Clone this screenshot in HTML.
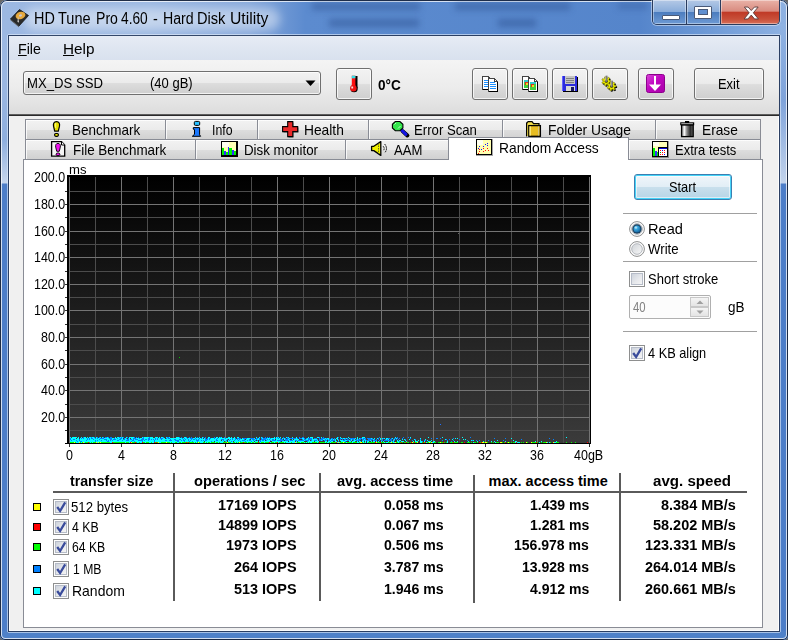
<!DOCTYPE html>
<html><head><meta charset="utf-8"><title>HD Tune Pro 4.60 - Hard Disk Utility</title>
<style>
html,body{margin:0;padding:0}
body{width:788px;height:640px;position:relative;overflow:hidden;background:#6a6a6a;font-family:"Liberation Sans",sans-serif;font-size:13px;color:#000}
div,span{position:absolute;box-sizing:border-box;white-space:nowrap}
.frame{left:0;top:0;width:788px;height:640px;border-radius:7px 7px 5px 5px;background:#4f81c8;overflow:hidden}
.tbg{left:0;top:0;width:788px;height:36px;background:linear-gradient(to right,#9cb8e2 0,#9ab7e1 150px,#86a8db 250px,#5c8bcf 305px,#5585cb 640px,#6a97d5 700px,#8fb2e2 788px)}
.lfr{left:0;top:30px;width:9px;height:610px;background:linear-gradient(to bottom,#9cb8e2 0,#9ab6e1 60px,#8eaede 110px,#c6d6ee 153px,#4c7dc8 154px,#4c7dc8 100%)}
.rfr{left:779px;top:24px;width:9px;height:616px;background:linear-gradient(to bottom,#8fb2e2 0,#7fa3da 76px,#c2d3ec 159px,#4c7dc8 160px,#4c7dc8 100%)}
.bfr{left:0;top:631px;width:788px;height:9px;background:#4f81c8}
.client{left:9px;top:36px;width:770px;height:595px;background:#f0f0f0}
.menu{left:9px;top:36px;width:770px;height:24px;background:linear-gradient(to bottom,#e6ecf5 0,#dfe6f1 50%,#d9e1ee 100%)}
.tool{left:9px;top:60px;width:770px;height:55px;background:linear-gradient(to bottom,#f4f4f4 0,#ececec 50%,#dcdcdc 100%)}
.btn{border:1px solid #707070;border-radius:3px;background:linear-gradient(to bottom,#f2f2f2 0,#ebebeb 48%,#dddddd 52%,#cfcfcf 100%);box-shadow:inset 0 0 0 1px rgba(255,255,255,.75)}
.tab{height:21px;border:1px solid #898c95;border-bottom:none;background:linear-gradient(to bottom,#f2f2f2 0,#ebebeb 48%,#dddddd 52%,#cfcfcf 100%);box-shadow:inset 1px 1px 0 0 rgba(255,255,255,.8)}
.tx{line-height:18px;transform-origin:0 0}
.yl{left:24px;width:42px;text-align:right;font-size:13px;line-height:16px}
.xl{top:448px;width:40px;text-align:center;font-size:13px;line-height:16px}
.b{font-weight:bold;font-size:14px;line-height:16px}
.hd{top:473px;text-align:center}
.v{text-align:right}
.cb{width:16px;height:16px;border:1px solid #8e8f8f;background:linear-gradient(135deg,#dcdcdc 0,#f6f6f6 100%);box-shadow:inset 0 0 0 1px #f4f4f4, inset 0 0 0 2px #b4b4b4}
.sq{left:33px;width:8px;height:8px;border:1px solid #000}
.sep{left:623px;width:134px;height:1px;background:#a0a0a0}
</style></head><body>
<div class="frame">
<div class="tbg"></div>
<div class="lfr"></div><div class="rfr"></div><div class="bfr"></div>
<!-- outer edges -->
<div style="left:0;top:0;width:788px;height:640px;border:1px solid #1c2a44;border-radius:7px 7px 5px 5px"></div>
<div style="left:1px;top:1px;width:786px;height:638px;border:1px solid rgba(255,255,255,.75);border-radius:6px 6px 4px 4px"></div>
<div style="left:7px;top:34px;width:774px;height:599px;border:1px solid rgba(225,236,250,.62);border-radius:2px"></div>
<!-- client border -->
<div style="left:8px;top:35px;width:772px;height:597px;border:1px solid #2b3f63;background:#f0f0f0"></div>
<div style="left:9px;top:36px;width:770px;height:595px;border:1px solid #fcfcfc;border-top:none"></div>
<div class="menu"></div>
<div class="tool"></div>
<div style="left:9px;top:114px;width:770px;height:2px;background:linear-gradient(to bottom,#777 0,#111 100%)"></div>

<!-- title -->
<div style="left:312px;top:3px;width:108px;height:7px;background:rgba(40,75,140,.45);filter:blur(3px)"></div>
<div style="left:455px;top:3px;width:115px;height:7px;background:rgba(40,75,140,.45);filter:blur(3px)"></div>
<div style="left:329px;top:19px;width:90px;height:8px;background:rgba(40,75,140,.45);filter:blur(3px)"></div>
<div style="left:498px;top:19px;width:38px;height:8px;background:rgba(40,75,140,.45);filter:blur(3px)"></div>
<div style="left:618px;top:3px;width:30px;height:6px;background:rgba(40,75,140,.35);filter:blur(3px)"></div>

<div style="left:24px;top:8px;width:256px;height:22px;border-radius:11px;background:rgba(255,255,255,.42);filter:blur(5px)"></div>
<svg style="position:absolute;left:9px;top:7px" width="22" height="22" viewBox="0 0 22 22">
<polygon points="1.5,12 10.5,2.5 19.5,8.5 10,19" fill="#2a2a2a" stroke="#111" stroke-width="0.8"/>
<polygon points="1.5,12 10,19 10,20.2 1.5,13.2" fill="#555"/>
<ellipse cx="11.5" cy="8.5" rx="5" ry="3.6" transform="rotate(-18 11.5 8.5)" fill="#e6a83c"/>
<ellipse cx="11.5" cy="8.5" rx="1.5" ry="1.1" transform="rotate(-18 11.5 8.5)" fill="#c8c8d8"/>
<path d="M9 9 L8.5 15 L10 15.5 Z" fill="#ddd"/>
</svg>

<!-- window buttons -->
<div style="left:652px;top:0;width:128px;height:25px;border:1px solid #2a3c5e;border-top:none;border-radius:0 0 5px 5px;overflow:hidden;box-shadow:0 0 0 1px rgba(255,255,255,.45)">
 <div style="left:0;top:0;width:34px;height:24px;background:linear-gradient(to bottom,#b4c9e6 0,#8badda 48%,#4c7dbf 52%,#6e9ad4 100%);border-right:1px solid #2a3c5e;box-shadow:inset 0 0 0 1px rgba(255,255,255,.4)"></div>
 <div style="left:34px;top:0;width:34px;height:24px;background:linear-gradient(to bottom,#b4c9e6 0,#8badda 48%,#4c7dbf 52%,#6e9ad4 100%);border-right:1px solid #2a3c5e;box-shadow:inset 0 0 0 1px rgba(255,255,255,.4)"></div>
 <div style="left:68px;top:0;width:59px;height:24px;background:linear-gradient(to bottom,#e9b2a8 0,#d98c80 46%,#c03a27 52%,#c8503a 80%,#d8705a 100%);box-shadow:inset 0 0 0 1px rgba(255,255,255,.4)"></div>
</div>
<div style="left:662px;top:15px;width:18px;height:5px;background:#fff;border:1px solid #4a5a78;border-radius:1px"></div>
<div style="left:694px;top:6px;width:18px;height:13px;border:1px solid #4a5a78;border-radius:1px;background:#fff"></div>
<div style="left:698px;top:9px;width:10px;height:6px;border:1px solid #4a5a78;background:#5f8fd0"></div>
<svg style="position:absolute;left:742.500px;top:6px" width="16.500" height="14" viewBox="0 0 18 15"><path d="M1.5 1 L5.5 1 L9 4.8 L12.5 1 L16.5 1 L11.3 7.3 L16.8 14 L12.6 14 L9 9.8 L5.4 14 L1.2 14 L6.7 7.3 Z" fill="#fff" stroke="#5a3a3a" stroke-width="1"/></svg>

<!-- menu -->

<!-- toolbar -->
<div class="btn" style="left:23px;top:71px;width:298px;height:24px"></div>
<svg style="position:absolute;left:305px;top:80px" width="11" height="7" viewBox="0 0 11 7"><polygon points="0.5,0.5 10.5,0.5 5.5,6" fill="#000"/></svg>

<div class="btn" style="left:336px;top:68px;width:36px;height:32px"></div>
<svg style="position:absolute;left:348px;top:75px" width="12" height="18" viewBox="0 0 12 18">
<rect x="5" y="1" width="4.500" height="12" fill="#000"/>
<circle cx="6.100" cy="13.700" r="3.600" fill="#000"/>
<rect x="3.800" y="0.700" width="3.600" height="12" fill="#ff1010"/>
<rect x="3.800" y="0.700" width="3.600" height="2.600" fill="#30e0e8"/>
<circle cx="5.400" cy="13.300" r="3.200" fill="#f01010"/>
<rect x="3.300" y="11.500" width="1.800" height="2" fill="#fff" opacity=".85"/>
</svg>

<div class="btn" style="left:472px;top:68px;width:36px;height:32px"></div>
<svg style="position:absolute;left:482px;top:76px" width="17" height="16" viewBox="0 0 17 16" shape-rendering="crispEdges"><g transform="translate(0,0)"><path d="M0.500 0.500 h6 l3 3 v10 h-9z" fill="#fff" stroke="#444" stroke-width="1"/><path d="M6.500 0.500 v3 h3" fill="none" stroke="#444" stroke-width="1"/><path d="M9.500 4 v10 M1 13.500 h9" stroke="#000" stroke-width="1"/><path d="M2 4.500h5M2 6.500h6M2 8.500h6M2 10.500h6" stroke="#1e90ff" stroke-width="1"/></g><g transform="translate(6,2)"><path d="M0.500 0.500 h6 l3 3 v10 h-9z" fill="#fff" stroke="#444" stroke-width="1"/><path d="M6.500 0.500 v3 h3" fill="none" stroke="#444" stroke-width="1"/><path d="M9.500 4 v10 M1 13.500 h9" stroke="#000" stroke-width="1"/><path d="M2 4.500h5M2 6.500h6M2 8.500h6M2 10.500h6" stroke="#1e90ff" stroke-width="1"/></g></svg>
<div class="btn" style="left:512px;top:68px;width:36px;height:32px"></div>
<svg style="position:absolute;left:522px;top:76px" width="17" height="16" viewBox="0 0 17 16" shape-rendering="crispEdges"><g transform="translate(0,0)"><path d="M0.500 0.500 h6 l3 3 v10 h-9z" fill="#fff" stroke="#444" stroke-width="1"/><path d="M6.500 0.500 v3 h3" fill="none" stroke="#444" stroke-width="1"/><path d="M9.500 4 v10 M1 13.500 h9" stroke="#000" stroke-width="1"/><rect x="2" y="4" width="6" height="8" fill="#30c8d0"/><rect x="2" y="6" width="6" height="6" fill="#40d040"/><rect x="3" y="6" width="3" height="3" fill="#e03020"/><rect x="4" y="7" width="2" height="2" fill="#f0e020"/></g><g transform="translate(6,2)"><path d="M0.500 0.500 h6 l3 3 v10 h-9z" fill="#fff" stroke="#444" stroke-width="1"/><path d="M6.500 0.500 v3 h3" fill="none" stroke="#444" stroke-width="1"/><path d="M9.500 4 v10 M1 13.500 h9" stroke="#000" stroke-width="1"/><rect x="2" y="4" width="6" height="8" fill="#30c8d0"/><rect x="2" y="6" width="6" height="6" fill="#40d040"/><rect x="3" y="6" width="3" height="3" fill="#e03020"/><rect x="4" y="7" width="2" height="2" fill="#f0e020"/></g></svg>
<div class="btn" style="left:552px;top:68px;width:36px;height:32px"></div>
<svg style="position:absolute;left:562px;top:76px" width="16" height="16" viewBox="0 0 16 16" shape-rendering="crispEdges"><rect x="0" y="0" width="15" height="15" fill="#2c2cdc"/><path d="M15.500 1 v15 M1 15.500 h15" stroke="#000" stroke-width="1"/><rect x="0" y="0" width="1" height="15" fill="#6060ff"/><rect x="3" y="0" width="10" height="8" fill="#c4c4c4"/><path d="M4 2.500h8M4 4.500h8M4 6.500h8" stroke="#808080" stroke-width="1"/><rect x="4" y="10" width="9" height="5" fill="#d8d8d8"/><rect x="9" y="11" width="3" height="4" fill="#181860"/></svg>
<div class="btn" style="left:592px;top:68px;width:36px;height:32px"></div>
<svg style="position:absolute;left:600px;top:75px" width="18" height="17" viewBox="0 0 18 17"><g transform="translate(6.3,6.2)"><path d="M4.51 -0.90 L4.51 0.90 L3.08 0.85 L2.59 1.88 L3.52 2.96 L2.11 4.09 L1.26 2.94 L0.14 3.20 L-0.12 4.60 L-1.88 4.20 L-1.52 2.82 L-2.41 2.11 L-3.67 2.77 L-4.46 1.14 L-3.15 0.57 L-3.15 -0.57 L-4.46 -1.14 L-3.67 -2.77 L-2.41 -2.11 L-1.52 -2.82 L-1.88 -4.20 L-0.12 -4.60 L0.14 -3.20 L1.26 -2.94 L2.11 -4.09 L3.52 -2.96 L2.59 -1.88 L3.08 -0.85Z" fill="#000" transform="translate(1,1)"/><path d="M4.51 -0.90 L4.51 0.90 L3.08 0.85 L2.59 1.88 L3.52 2.96 L2.11 4.09 L1.26 2.94 L0.14 3.20 L-0.12 4.60 L-1.88 4.20 L-1.52 2.82 L-2.41 2.11 L-3.67 2.77 L-4.46 1.14 L-3.15 0.57 L-3.15 -0.57 L-4.46 -1.14 L-3.67 -2.77 L-2.41 -2.11 L-1.52 -2.82 L-1.88 -4.20 L-0.12 -4.60 L0.14 -3.20 L1.26 -2.94 L2.11 -4.09 L3.52 -2.96 L2.59 -1.88 L3.08 -0.85Z" fill="#e8e800" stroke="#6a6a00" stroke-width="0.500"/><circle r="1.500" fill="#303000"/><rect x="-1" y="-5.500" width="2" height="6" fill="#a8a8a8"/><rect x="0.200" y="-5.500" width="0.800" height="6" fill="#505050"/></g><g transform="translate(11.6,11.2)"><path d="M4.51 -0.90 L4.51 0.90 L3.08 0.85 L2.59 1.88 L3.52 2.96 L2.11 4.09 L1.26 2.94 L0.14 3.20 L-0.12 4.60 L-1.88 4.20 L-1.52 2.82 L-2.41 2.11 L-3.67 2.77 L-4.46 1.14 L-3.15 0.57 L-3.15 -0.57 L-4.46 -1.14 L-3.67 -2.77 L-2.41 -2.11 L-1.52 -2.82 L-1.88 -4.20 L-0.12 -4.60 L0.14 -3.20 L1.26 -2.94 L2.11 -4.09 L3.52 -2.96 L2.59 -1.88 L3.08 -0.85Z" fill="#000" transform="translate(1,1)"/><path d="M4.51 -0.90 L4.51 0.90 L3.08 0.85 L2.59 1.88 L3.52 2.96 L2.11 4.09 L1.26 2.94 L0.14 3.20 L-0.12 4.60 L-1.88 4.20 L-1.52 2.82 L-2.41 2.11 L-3.67 2.77 L-4.46 1.14 L-3.15 0.57 L-3.15 -0.57 L-4.46 -1.14 L-3.67 -2.77 L-2.41 -2.11 L-1.52 -2.82 L-1.88 -4.20 L-0.12 -4.60 L0.14 -3.20 L1.26 -2.94 L2.11 -4.09 L3.52 -2.96 L2.59 -1.88 L3.08 -0.85Z" fill="#e8e800" stroke="#6a6a00" stroke-width="0.500"/><circle r="1.500" fill="#303000"/><rect x="-1" y="-5.500" width="2" height="6" fill="#a8a8a8"/><rect x="0.200" y="-5.500" width="0.800" height="6" fill="#505050"/></g></svg>
<div class="btn" style="left:638px;top:68px;width:36px;height:32px"></div>
<svg style="position:absolute;left:646px;top:74px" width="19" height="19" viewBox="0 0 19 19">
<defs><linearGradient id="mg" x1="0" y1="0" x2="1" y2="1"><stop offset="0" stop-color="#d848d8"/><stop offset="0.45" stop-color="#c008c0"/><stop offset="1" stop-color="#a800a8"/></linearGradient></defs>
<rect x="0.500" y="0.500" width="18" height="18" rx="2" fill="url(#mg)" stroke="#8c008c" stroke-width="1"/>
<rect x="8" y="2" width="2" height="11" fill="#fff"/><polygon points="3,10.500 15,10.500 9,17" fill="#fff"/>
</svg>
<div class="btn" style="left:694px;top:68px;width:70px;height:32px"></div>

<!-- tabs row 1 -->
<div class="tab" style="left:25px;top:119px;width:141px"></div>
<div class="tab" style="left:165px;top:119px;width:93px"></div>
<div class="tab" style="left:257px;top:119px;width:112px"></div>
<div class="tab" style="left:368px;top:119px;width:135px"></div>
<div class="tab" style="left:502px;top:119px;width:154px"></div>
<div class="tab" style="left:655px;top:119px;width:106px"></div>
<!-- tabs row 2 -->
<div class="tab" style="left:25px;top:139px;width:171px"></div>
<div class="tab" style="left:195px;top:139px;width:151px"></div>
<div class="tab" style="left:345px;top:139px;width:104px"></div>
<div class="tab" style="left:628px;top:139px;width:133px"></div>
<!-- panel -->
<div style="left:23px;top:159px;width:740px;height:469px;border:1px solid #898c95;background:#fff"></div>
<div style="left:448px;top:137px;width:181px;height:23px;border:1px solid #898c95;border-bottom:none;background:#fff"></div>

<!-- tab labels -->

<!-- tab icons -->
<svg style="position:absolute;left:0;top:0" width="788" height="165" viewBox="0 0 788 165">
<!-- benchmark: yellow ! -->
<path d="M56.500 121.600 c2.700 0 3.400 2.200 3 4.600 l-1.200 4.900 h-3.600 l-1.200 -4.900 c-0.400 -2.400 0.300 -4.600 3 -4.600z" fill="#e6e000" stroke="#000" stroke-width="1.200"/>
<rect x="54.600" y="133.500" width="3.800" height="2.800" rx="1.200" fill="#e6e000" stroke="#000" stroke-width="1.200"/>
<rect x="55" y="123" width="1.200" height="5" fill="#fafa90" opacity=".8"/>
<!-- info: blue i -->
<rect x="194.300" y="121.400" width="5.400" height="4" rx="1.200" fill="#28c0ff" stroke="#000" stroke-width="1"/>
<path d="M193.300 127.600 H199.600 V134.800 L200.600 136.300 H192.300 L194.500 134.300 V129.600 L193.300 129.200 Z" fill="#1a78ff" stroke="#000" stroke-width="1" stroke-linejoin="round"/>
<!-- health: red cross -->
<path d="M288.500 122.500 H293.500 V127.500 H298.500 V132.500 H293.500 V137.500 H288.500 V132.500 H283.500 V127.500 H288.500 Z" fill="#000" opacity=".55"/>
<path d="M287.700 121.600 H292.800 V126.600 H297.700 V131.600 H292.800 V136.600 H287.700 V131.600 H282.600 V126.600 H287.700 Z" fill="#e82a2a" stroke="#000" stroke-width="1.100"/>
<!-- error scan: magnifier -->
<path d="M402 130.500 L406.800 134.900" stroke="#000" stroke-width="4" stroke-linecap="round" transform="translate(0.600,0.600)"/>
<path d="M401.500 130 L406 134.300" stroke="#1414e6" stroke-width="3" stroke-linecap="round"/>
<path d="M395.300 121.500 H399.900 L402.900 124.300 V128 L399.900 130.700 H395.300 L392.400 128 V124.300 Z" fill="#34e64c" stroke="#000" stroke-width="1.100"/>
<path d="M394.500 124.500 l1.500 -1.500 M398 128.500 l2.500 -2.500" stroke="#d8ffd8" stroke-width="0.800"/>
<!-- folder -->
<path d="M526.600 136.200 V123 L528.200 121.600 H532 L533.600 123.700 H539 V126 " fill="#f4e04a" stroke="#000" stroke-width="1.200"/>
<rect x="526.600" y="124" width="3" height="12" fill="#f4e04a"/>
<path d="M526.600 136.200 V123" stroke="#000" stroke-width="1.200"/>
<rect x="528.800" y="125.600" width="11.600" height="10.700" fill="#e6bc22" stroke="#000" stroke-width="1.300"/>
<rect x="529.500" y="126.300" width="1.200" height="9.300" fill="#fff8a0"/>
<rect x="538.200" y="126.300" width="0.600" height="9.300" fill="#c8c8c8"/>
<!-- erase: trash -->
<defs><linearGradient id="tg" x1="0" y1="0" x2="1" y2="0"><stop offset="0" stop-color="#8a8a8a"/><stop offset="0.25" stop-color="#f4f4f4"/><stop offset="0.45" stop-color="#8c8c8c"/><stop offset="0.75" stop-color="#2a2a2a"/><stop offset="1" stop-color="#6a6a6a"/></linearGradient></defs>
<rect x="685" y="121" width="4.200" height="2" fill="#000"/>
<rect x="680.200" y="122.300" width="14" height="3" fill="#000"/>
<rect x="681.300" y="123.200" width="11.600" height="1.300" fill="#b8b8b8"/>
<rect x="681.600" y="125" width="11.600" height="11.600" fill="url(#tg)" stroke="#000" stroke-width="1.300"/>
<!-- file benchmark -->
<path d="M51.600 141.700 H61.500 L64.700 145 V156.200 H51.600 Z" fill="#f4f4f4" stroke="#000" stroke-width="1.300"/>
<path d="M61.500 141.700 V145 H64.700" fill="#fff" stroke="#000" stroke-width="1"/>
<path d="M58 143.400 c2 0 2.700 1.700 2.300 3.700 l-1 4.200 h-2.600 l-1 -4.200 c-0.400 -2 0.300 -3.700 2.300 -3.700z" fill="#f010f0" stroke="#000" stroke-width="0.900"/>
<ellipse cx="58" cy="154.300" rx="1.900" ry="1.400" fill="#f010f0" stroke="#000" stroke-width="0.900"/>
<!-- disk monitor -->
<g shape-rendering="crispEdges"><rect x="221" y="141" width="17" height="16" fill="#000"/><rect x="222" y="142" width="14" height="13" fill="#ffffb4"/><rect x="222" y="142" width="7" height="5" fill="#fffff0"/>
<rect x="222" y="148" width="2" height="7" fill="#00f000"/><rect x="224" y="151" width="2" height="4" fill="#3030ff"/><rect x="226" y="152" width="2" height="3" fill="#00f000"/><rect x="228" y="147" width="1" height="8" fill="#3030ff"/><rect x="229" y="148" width="3" height="7" fill="#00f000"/><rect x="232" y="150" width="2" height="5" fill="#3030ff"/><rect x="234" y="151" width="2" height="4" fill="#00f000"/></g>
<!-- AAM speaker -->
<path d="M371.600 146.300 H373.800 L380.800 141.600 V155.400 L373.800 150.600 H371.600 Z" fill="#f0f000" stroke="#000" stroke-width="1.300" stroke-linejoin="round"/>
<path d="M378.500 143 V154" stroke="#333" stroke-width="0.700" stroke-dasharray="1.500 1"/>
<path d="M383.200 146.300 q2 2.200 0 4.500 M384.600 144 q3.800 4.500 0 9" fill="none" stroke="#000" stroke-width="1" stroke-dasharray="1.600 0.800"/>
<!-- random access -->
<g shape-rendering="crispEdges"><rect x="476" y="139" width="17" height="17" fill="#000" opacity=".35"/><rect x="476" y="139" width="16" height="16" fill="#000"/><rect x="477" y="140" width="14" height="14" fill="#ffffb0"/><rect x="477" y="140" width="6" height="5" fill="#fffff0"/><rect x="479" y="146" width="1" height="1" fill="#1010ff"/><rect x="478" y="148" width="1" height="1" fill="#1010ff"/><rect x="481" y="149" width="1" height="1" fill="#1010ff"/><rect x="483" y="146" width="1" height="1" fill="#1010ff"/><rect x="485" y="144" width="1" height="1" fill="#1010ff"/><rect x="487" y="143" width="1" height="1" fill="#1010ff"/><rect x="487" y="145" width="1" height="1" fill="#1010ff"/><rect x="479" y="149" width="1" height="1" fill="#ff1010"/><rect x="479" y="151" width="1" height="1" fill="#ff1010"/><rect x="478" y="153" width="1" height="1" fill="#ff1010"/><rect x="483" y="148" width="1" height="1" fill="#ff1010"/><rect x="483" y="151" width="1" height="1" fill="#ff1010"/><rect x="485" y="150" width="1" height="1" fill="#ff1010"/><rect x="487" y="148" width="1" height="1" fill="#ff1010"/><rect x="488" y="150" width="1" height="1" fill="#ff1010"/></g>
<!-- extra tests -->
<g shape-rendering="crispEdges"><rect x="652" y="141" width="17" height="17" fill="#000" opacity=".35"/><rect x="652" y="141" width="16" height="16" fill="#000"/><rect x="653" y="142" width="14" height="14" fill="#ffffb8"/><rect x="653" y="142" width="6" height="4" fill="#fffff0"/><rect x="653" y="148" width="2" height="8" fill="#00f000"/><rect x="655" y="151" width="2" height="5" fill="#3030ff"/><rect x="657" y="152" width="1" height="4" fill="#00f000"/><rect x="658" y="147" width="10" height="10" fill="#000"/><rect x="659" y="148" width="8" height="8" fill="#fff"/><rect x="659" y="148" width="8" height="1" fill="#0808e0"/><rect x="660" y="150" width="1" height="1" fill="#ff1010"/><rect x="662" y="150" width="1" height="1" fill="#1010ff"/><rect x="664" y="150" width="1" height="1" fill="#ff1010"/><rect x="660" y="152" width="1" height="1" fill="#00c000"/><rect x="662" y="152" width="1" height="1" fill="#ff1010"/><rect x="664" y="152" width="1" height="1" fill="#ff1010"/><rect x="660" y="154" width="1" height="1" fill="#ff1010"/><rect x="662" y="154" width="1" height="1" fill="#ff1010"/><rect x="664" y="154" width="1" height="1" fill="#1010ff"/></g>
</svg>

<!-- chart -->
<svg style="position:absolute;left:0;top:0" width="788" height="640" viewBox="0 0 788 640" shape-rendering="crispEdges"><defs><linearGradient id="cg" x1="0" y1="0" x2="0" y2="1"><stop offset="0" stop-color="#000"/><stop offset="1" stop-color="#3b3b3b"/></linearGradient></defs><rect x="67" y="175" width="524" height="269" fill="#000"/><rect x="69" y="177" width="521" height="267" fill="url(#cg)"/><rect x="69" y="430" width="521" height="1" fill="#4c4c4c"/><rect x="69" y="404" width="521" height="1" fill="#4c4c4c"/><rect x="69" y="377" width="521" height="1" fill="#4c4c4c"/><rect x="69" y="350" width="521" height="1" fill="#4c4c4c"/><rect x="69" y="324" width="521" height="1" fill="#4c4c4c"/><rect x="69" y="297" width="521" height="1" fill="#4c4c4c"/><rect x="69" y="271" width="521" height="1" fill="#4c4c4c"/><rect x="69" y="244" width="521" height="1" fill="#4c4c4c"/><rect x="69" y="217" width="521" height="1" fill="#4c4c4c"/><rect x="69" y="191" width="521" height="1" fill="#4c4c4c"/><rect x="95" y="177" width="1" height="267" fill="#4c4c4c"/><rect x="147" y="177" width="1" height="267" fill="#4c4c4c"/><rect x="199" y="177" width="1" height="267" fill="#4c4c4c"/><rect x="251" y="177" width="1" height="267" fill="#4c4c4c"/><rect x="303" y="177" width="1" height="267" fill="#4c4c4c"/><rect x="355" y="177" width="1" height="267" fill="#4c4c4c"/><rect x="407" y="177" width="1" height="267" fill="#4c4c4c"/><rect x="459" y="177" width="1" height="267" fill="#4c4c4c"/><rect x="511" y="177" width="1" height="267" fill="#4c4c4c"/><rect x="563" y="177" width="1" height="267" fill="#4c4c4c"/><rect x="69" y="417" width="521" height="1" fill="#747474"/><rect x="69" y="390" width="521" height="1" fill="#747474"/><rect x="69" y="364" width="521" height="1" fill="#747474"/><rect x="69" y="337" width="521" height="1" fill="#747474"/><rect x="69" y="310" width="521" height="1" fill="#747474"/><rect x="69" y="284" width="521" height="1" fill="#747474"/><rect x="69" y="257" width="521" height="1" fill="#747474"/><rect x="69" y="231" width="521" height="1" fill="#747474"/><rect x="69" y="204" width="521" height="1" fill="#747474"/><rect x="69" y="177" width="1" height="267" fill="#747474"/><rect x="121" y="177" width="1" height="267" fill="#747474"/><rect x="173" y="177" width="1" height="267" fill="#747474"/><rect x="225" y="177" width="1" height="267" fill="#747474"/><rect x="277" y="177" width="1" height="267" fill="#747474"/><rect x="329" y="177" width="1" height="267" fill="#747474"/><rect x="381" y="177" width="1" height="267" fill="#747474"/><rect x="433" y="177" width="1" height="267" fill="#747474"/><rect x="485" y="177" width="1" height="267" fill="#747474"/><rect x="537" y="177" width="1" height="267" fill="#747474"/><rect x="589" y="177" width="1" height="267" fill="#747474"/><rect x="65" y="430" width="2" height="1" fill="#303030"/><rect x="65" y="417" width="2" height="1" fill="#303030"/><rect x="65" y="404" width="2" height="1" fill="#303030"/><rect x="65" y="390" width="2" height="1" fill="#303030"/><rect x="65" y="377" width="2" height="1" fill="#303030"/><rect x="65" y="364" width="2" height="1" fill="#303030"/><rect x="65" y="350" width="2" height="1" fill="#303030"/><rect x="65" y="337" width="2" height="1" fill="#303030"/><rect x="65" y="324" width="2" height="1" fill="#303030"/><rect x="65" y="310" width="2" height="1" fill="#303030"/><rect x="65" y="297" width="2" height="1" fill="#303030"/><rect x="65" y="284" width="2" height="1" fill="#303030"/><rect x="65" y="271" width="2" height="1" fill="#303030"/><rect x="65" y="257" width="2" height="1" fill="#303030"/><rect x="65" y="244" width="2" height="1" fill="#303030"/><rect x="65" y="231" width="2" height="1" fill="#303030"/><rect x="65" y="217" width="2" height="1" fill="#303030"/><rect x="65" y="204" width="2" height="1" fill="#303030"/><rect x="65" y="191" width="2" height="1" fill="#303030"/><rect x="69" y="444" width="1" height="3" fill="#303030"/><rect x="121" y="444" width="1" height="3" fill="#303030"/><rect x="173" y="444" width="1" height="3" fill="#303030"/><rect x="225" y="444" width="1" height="3" fill="#303030"/><rect x="277" y="444" width="1" height="3" fill="#303030"/><rect x="329" y="444" width="1" height="3" fill="#303030"/><rect x="381" y="444" width="1" height="3" fill="#303030"/><rect x="433" y="444" width="1" height="3" fill="#303030"/><rect x="485" y="444" width="1" height="3" fill="#303030"/><rect x="537" y="444" width="1" height="3" fill="#303030"/><rect x="589" y="444" width="1" height="3" fill="#303030"/><rect x="65" y="443" width="526" height="1" fill="#000"/><rect x="590" y="175" width="1" height="269" fill="#000"/><rect x="70" y="437" width="1" height="1" fill="#00ffff"/><rect x="72" y="437" width="5" height="1" fill="#00ffff"/><rect x="78" y="437" width="1" height="1" fill="#00ffff"/><rect x="81" y="437" width="1" height="1" fill="#00ffff"/><rect x="83" y="437" width="1" height="1" fill="#0080ff"/><rect x="84" y="437" width="2" height="1" fill="#00ffff"/><rect x="87" y="437" width="1" height="1" fill="#00ffff"/><rect x="89" y="437" width="2" height="1" fill="#00ffff"/><rect x="91" y="437" width="1" height="1" fill="#0080ff"/><rect x="92" y="437" width="2" height="1" fill="#00ffff"/><rect x="94" y="437" width="1" height="1" fill="#0080ff"/><rect x="96" y="437" width="1" height="1" fill="#00ffff"/><rect x="97" y="437" width="1" height="1" fill="#0080ff"/><rect x="99" y="437" width="1" height="1" fill="#0080ff"/><rect x="100" y="437" width="1" height="1" fill="#00ffff"/><rect x="102" y="437" width="1" height="1" fill="#00ffff"/><rect x="103" y="437" width="1" height="1" fill="#0080ff"/><rect x="105" y="437" width="2" height="1" fill="#0080ff"/><rect x="107" y="437" width="1" height="1" fill="#00ffff"/><rect x="108" y="437" width="1" height="1" fill="#0080ff"/><rect x="110" y="437" width="2" height="1" fill="#0080ff"/><rect x="115" y="437" width="1" height="1" fill="#00ffff"/><rect x="117" y="437" width="2" height="1" fill="#00ffff"/><rect x="119" y="437" width="1" height="1" fill="#0080ff"/><rect x="120" y="437" width="1" height="1" fill="#00ffff"/><rect x="121" y="437" width="1" height="1" fill="#0080ff"/><rect x="122" y="437" width="1" height="1" fill="#00ffff"/><rect x="123" y="437" width="1" height="1" fill="#0080ff"/><rect x="126" y="437" width="1" height="1" fill="#00ffff"/><rect x="127" y="437" width="1" height="1" fill="#0080ff"/><rect x="129" y="437" width="5" height="1" fill="#00ffff"/><rect x="134" y="437" width="1" height="1" fill="#0080ff"/><rect x="136" y="437" width="1" height="1" fill="#0080ff"/><rect x="138" y="437" width="1" height="1" fill="#0080ff"/><rect x="142" y="437" width="1" height="1" fill="#00ffff"/><rect x="143" y="437" width="1" height="1" fill="#0080ff"/><rect x="144" y="437" width="5" height="1" fill="#00ffff"/><rect x="149" y="437" width="1" height="1" fill="#0080ff"/><rect x="150" y="437" width="3" height="1" fill="#00ffff"/><rect x="155" y="437" width="3" height="1" fill="#00ffff"/><rect x="159" y="437" width="1" height="1" fill="#00ffff"/><rect x="161" y="437" width="2" height="1" fill="#00ffff"/><rect x="163" y="437" width="1" height="1" fill="#0080ff"/><rect x="166" y="437" width="1" height="1" fill="#00ffff"/><rect x="167" y="437" width="2" height="1" fill="#0080ff"/><rect x="169" y="437" width="1" height="1" fill="#00ffff"/><rect x="176" y="437" width="3" height="1" fill="#00ffff"/><rect x="179" y="437" width="1" height="1" fill="#0080ff"/><rect x="181" y="437" width="1" height="1" fill="#0080ff"/><rect x="184" y="437" width="2" height="1" fill="#00ffff"/><rect x="186" y="437" width="1" height="1" fill="#0080ff"/><rect x="189" y="437" width="1" height="1" fill="#0080ff"/><rect x="191" y="437" width="1" height="1" fill="#0080ff"/><rect x="195" y="437" width="1" height="1" fill="#00ffff"/><rect x="197" y="437" width="1" height="1" fill="#0080ff"/><rect x="199" y="437" width="1" height="1" fill="#00ffff"/><rect x="202" y="437" width="1" height="1" fill="#00ffff"/><rect x="203" y="437" width="1" height="1" fill="#0080ff"/><rect x="205" y="437" width="1" height="1" fill="#0080ff"/><rect x="208" y="437" width="2" height="1" fill="#00ffff"/><rect x="214" y="437" width="1" height="1" fill="#0080ff"/><rect x="216" y="437" width="2" height="1" fill="#00ffff"/><rect x="219" y="437" width="1" height="1" fill="#00ffff"/><rect x="220" y="437" width="1" height="1" fill="#0080ff"/><rect x="221" y="437" width="1" height="1" fill="#00ffff"/><rect x="224" y="437" width="1" height="1" fill="#0080ff"/><rect x="228" y="437" width="2" height="1" fill="#00ffff"/><rect x="231" y="437" width="1" height="1" fill="#00ffff"/><rect x="234" y="437" width="1" height="1" fill="#00ffff"/><rect x="237" y="437" width="2" height="1" fill="#00ffff"/><rect x="256" y="437" width="1" height="1" fill="#00ffff"/><rect x="259" y="437" width="1" height="1" fill="#00ffff"/><rect x="261" y="437" width="1" height="1" fill="#00ffff"/><rect x="262" y="437" width="1" height="1" fill="#0080ff"/><rect x="265" y="437" width="1" height="1" fill="#0080ff"/><rect x="267" y="437" width="1" height="1" fill="#0080ff"/><rect x="269" y="437" width="1" height="1" fill="#0080ff"/><rect x="274" y="437" width="1" height="1" fill="#00ffff"/><rect x="276" y="437" width="1" height="1" fill="#00ffff"/><rect x="277" y="437" width="1" height="1" fill="#0080ff"/><rect x="278" y="437" width="1" height="1" fill="#00ffff"/><rect x="280" y="437" width="1" height="1" fill="#00ffff"/><rect x="283" y="437" width="1" height="1" fill="#0080ff"/><rect x="286" y="437" width="1" height="1" fill="#00ffff"/><rect x="287" y="437" width="1" height="1" fill="#0080ff"/><rect x="288" y="437" width="1" height="1" fill="#00ffff"/><rect x="292" y="437" width="1" height="1" fill="#00ffff"/><rect x="296" y="437" width="1" height="1" fill="#00ffff"/><rect x="299" y="437" width="1" height="1" fill="#0080ff"/><rect x="302" y="437" width="2" height="1" fill="#0080ff"/><rect x="308" y="437" width="1" height="1" fill="#00ffff"/><rect x="310" y="437" width="3" height="1" fill="#00ffff"/><rect x="317" y="437" width="2" height="1" fill="#00ffff"/><rect x="319" y="437" width="1" height="1" fill="#0080ff"/><rect x="321" y="437" width="1" height="1" fill="#00ffff"/><rect x="323" y="437" width="1" height="1" fill="#0080ff"/><rect x="337" y="437" width="1" height="1" fill="#00ffff"/><rect x="338" y="437" width="1" height="1" fill="#0080ff"/><rect x="340" y="437" width="1" height="1" fill="#00ffff"/><rect x="348" y="437" width="1" height="1" fill="#00ffff"/><rect x="357" y="437" width="1" height="1" fill="#00ffff"/><rect x="362" y="437" width="3" height="1" fill="#00ffff"/><rect x="379" y="437" width="1" height="1" fill="#0080ff"/><rect x="395" y="437" width="1" height="1" fill="#00ffff"/><rect x="397" y="437" width="1" height="1" fill="#0080ff"/><rect x="403" y="437" width="1" height="1" fill="#0080ff"/><rect x="408" y="437" width="1" height="1" fill="#0080ff"/><rect x="410" y="437" width="1" height="1" fill="#00ffff"/><rect x="428" y="437" width="1" height="1" fill="#00ffff"/><rect x="442" y="437" width="1" height="1" fill="#00ffff"/><rect x="462" y="437" width="1" height="1" fill="#00ffff"/><rect x="470" y="437" width="1" height="1" fill="#0080ff"/><rect x="566" y="437" width="1" height="1" fill="#00ffff"/><rect x="70" y="438" width="1" height="1" fill="#0080ff"/><rect x="71" y="438" width="5" height="1" fill="#00ffff"/><rect x="77" y="438" width="2" height="1" fill="#00ffff"/><rect x="80" y="438" width="1" height="1" fill="#00ffff"/><rect x="81" y="438" width="1" height="1" fill="#0080ff"/><rect x="82" y="438" width="1" height="1" fill="#00ffff"/><rect x="83" y="438" width="1" height="1" fill="#0080ff"/><rect x="84" y="438" width="3" height="1" fill="#00ffff"/><rect x="87" y="438" width="1" height="1" fill="#0080ff"/><rect x="88" y="438" width="1" height="1" fill="#00ffff"/><rect x="89" y="438" width="1" height="1" fill="#0080ff"/><rect x="90" y="438" width="1" height="1" fill="#00ffff"/><rect x="91" y="438" width="2" height="1" fill="#0080ff"/><rect x="93" y="438" width="2" height="1" fill="#00ffff"/><rect x="95" y="438" width="1" height="1" fill="#0080ff"/><rect x="96" y="438" width="1" height="1" fill="#00ffff"/><rect x="97" y="438" width="1" height="1" fill="#0080ff"/><rect x="98" y="438" width="2" height="1" fill="#00ffff"/><rect x="100" y="438" width="4" height="1" fill="#0080ff"/><rect x="104" y="438" width="5" height="1" fill="#00ffff"/><rect x="109" y="438" width="3" height="1" fill="#0080ff"/><rect x="112" y="438" width="2" height="1" fill="#00ffff"/><rect x="114" y="438" width="1" height="1" fill="#0080ff"/><rect x="115" y="438" width="2" height="1" fill="#00ffff"/><rect x="117" y="438" width="1" height="1" fill="#0080ff"/><rect x="118" y="438" width="2" height="1" fill="#00ffff"/><rect x="120" y="438" width="2" height="1" fill="#0080ff"/><rect x="122" y="438" width="1" height="1" fill="#00ffff"/><rect x="124" y="438" width="1" height="1" fill="#0080ff"/><rect x="125" y="438" width="1" height="1" fill="#00ffff"/><rect x="126" y="438" width="1" height="1" fill="#0080ff"/><rect x="128" y="438" width="1" height="1" fill="#0080ff"/><rect x="129" y="438" width="1" height="1" fill="#00ffff"/><rect x="131" y="438" width="2" height="1" fill="#00ffff"/><rect x="133" y="438" width="3" height="1" fill="#0080ff"/><rect x="136" y="438" width="3" height="1" fill="#00ffff"/><rect x="139" y="438" width="1" height="1" fill="#0080ff"/><rect x="140" y="438" width="2" height="1" fill="#00ffff"/><rect x="142" y="438" width="2" height="1" fill="#0080ff"/><rect x="144" y="438" width="4" height="1" fill="#00ffff"/><rect x="148" y="438" width="2" height="1" fill="#0080ff"/><rect x="150" y="438" width="5" height="1" fill="#00ffff"/><rect x="155" y="438" width="1" height="1" fill="#0080ff"/><rect x="156" y="438" width="1" height="1" fill="#00ffff"/><rect x="157" y="438" width="1" height="1" fill="#0080ff"/><rect x="158" y="438" width="2" height="1" fill="#00ffff"/><rect x="160" y="438" width="3" height="1" fill="#0080ff"/><rect x="163" y="438" width="2" height="1" fill="#00ffff"/><rect x="166" y="438" width="1" height="1" fill="#0080ff"/><rect x="167" y="438" width="1" height="1" fill="#00ffff"/><rect x="168" y="438" width="2" height="1" fill="#0080ff"/><rect x="170" y="438" width="12" height="1" fill="#00ffff"/><rect x="182" y="438" width="1" height="1" fill="#0080ff"/><rect x="183" y="438" width="1" height="1" fill="#00ffff"/><rect x="184" y="438" width="1" height="1" fill="#0080ff"/><rect x="185" y="438" width="2" height="1" fill="#00ffff"/><rect x="187" y="438" width="1" height="1" fill="#0080ff"/><rect x="188" y="438" width="2" height="1" fill="#00ffff"/><rect x="190" y="438" width="3" height="1" fill="#0080ff"/><rect x="193" y="438" width="2" height="1" fill="#00ffff"/><rect x="195" y="438" width="1" height="1" fill="#0080ff"/><rect x="196" y="438" width="3" height="1" fill="#00ffff"/><rect x="199" y="438" width="1" height="1" fill="#0080ff"/><rect x="200" y="438" width="1" height="1" fill="#00ffff"/><rect x="201" y="438" width="1" height="1" fill="#0080ff"/><rect x="202" y="438" width="1" height="1" fill="#00ffff"/><rect x="204" y="438" width="1" height="1" fill="#00ffff"/><rect x="205" y="438" width="1" height="1" fill="#0080ff"/><rect x="207" y="438" width="1" height="1" fill="#0080ff"/><rect x="208" y="438" width="1" height="1" fill="#00ffff"/><rect x="209" y="438" width="2" height="1" fill="#0080ff"/><rect x="211" y="438" width="3" height="1" fill="#00ffff"/><rect x="214" y="438" width="1" height="1" fill="#0080ff"/><rect x="215" y="438" width="2" height="1" fill="#00ffff"/><rect x="217" y="438" width="1" height="1" fill="#0080ff"/><rect x="218" y="438" width="7" height="1" fill="#00ffff"/><rect x="225" y="438" width="1" height="1" fill="#0080ff"/><rect x="226" y="438" width="6" height="1" fill="#00ffff"/><rect x="232" y="438" width="1" height="1" fill="#0080ff"/><rect x="233" y="438" width="2" height="1" fill="#00ffff"/><rect x="235" y="438" width="1" height="1" fill="#0080ff"/><rect x="237" y="438" width="4" height="1" fill="#0080ff"/><rect x="242" y="438" width="1" height="1" fill="#00ffff"/><rect x="243" y="438" width="4" height="1" fill="#0080ff"/><rect x="247" y="438" width="3" height="1" fill="#00ffff"/><rect x="250" y="438" width="4" height="1" fill="#0080ff"/><rect x="254" y="438" width="1" height="1" fill="#00ffff"/><rect x="256" y="438" width="2" height="1" fill="#0080ff"/><rect x="258" y="438" width="1" height="1" fill="#00ffff"/><rect x="259" y="438" width="1" height="1" fill="#0080ff"/><rect x="261" y="438" width="1" height="1" fill="#0080ff"/><rect x="262" y="438" width="1" height="1" fill="#00ffff"/><rect x="263" y="438" width="4" height="1" fill="#0080ff"/><rect x="267" y="438" width="3" height="1" fill="#00ffff"/><rect x="270" y="438" width="1" height="1" fill="#0080ff"/><rect x="271" y="438" width="4" height="1" fill="#00ffff"/><rect x="275" y="438" width="1" height="1" fill="#0080ff"/><rect x="276" y="438" width="2" height="1" fill="#00ffff"/><rect x="278" y="438" width="1" height="1" fill="#0080ff"/><rect x="279" y="438" width="1" height="1" fill="#00ffff"/><rect x="280" y="438" width="1" height="1" fill="#0080ff"/><rect x="282" y="438" width="1" height="1" fill="#00ffff"/><rect x="283" y="438" width="1" height="1" fill="#0080ff"/><rect x="284" y="438" width="1" height="1" fill="#00ffff"/><rect x="285" y="438" width="1" height="1" fill="#0080ff"/><rect x="287" y="438" width="2" height="1" fill="#0080ff"/><rect x="289" y="438" width="1" height="1" fill="#00ffff"/><rect x="290" y="438" width="6" height="1" fill="#0080ff"/><rect x="296" y="438" width="1" height="1" fill="#00ffff"/><rect x="297" y="438" width="1" height="1" fill="#0080ff"/><rect x="299" y="438" width="3" height="1" fill="#0080ff"/><rect x="302" y="438" width="2" height="1" fill="#00ffff"/><rect x="304" y="438" width="1" height="1" fill="#0080ff"/><rect x="306" y="438" width="1" height="1" fill="#0080ff"/><rect x="307" y="438" width="1" height="1" fill="#00ffff"/><rect x="308" y="438" width="4" height="1" fill="#0080ff"/><rect x="312" y="438" width="1" height="1" fill="#00ffff"/><rect x="314" y="438" width="3" height="1" fill="#0080ff"/><rect x="319" y="438" width="1" height="1" fill="#0080ff"/><rect x="321" y="438" width="4" height="1" fill="#0080ff"/><rect x="325" y="438" width="1" height="1" fill="#00ffff"/><rect x="326" y="438" width="1" height="1" fill="#0080ff"/><rect x="327" y="438" width="2" height="1" fill="#00ffff"/><rect x="331" y="438" width="2" height="1" fill="#0080ff"/><rect x="334" y="438" width="1" height="1" fill="#0080ff"/><rect x="336" y="438" width="2" height="1" fill="#00ffff"/><rect x="340" y="438" width="1" height="1" fill="#0080ff"/><rect x="341" y="438" width="1" height="1" fill="#00ffff"/><rect x="342" y="438" width="1" height="1" fill="#0080ff"/><rect x="343" y="438" width="2" height="1" fill="#00ffff"/><rect x="345" y="438" width="1" height="1" fill="#0080ff"/><rect x="346" y="438" width="1" height="1" fill="#00ffff"/><rect x="347" y="438" width="1" height="1" fill="#0080ff"/><rect x="349" y="438" width="1" height="1" fill="#00ffff"/><rect x="350" y="438" width="5" height="1" fill="#0080ff"/><rect x="355" y="438" width="1" height="1" fill="#00ffff"/><rect x="357" y="438" width="1" height="1" fill="#00ffff"/><rect x="359" y="438" width="1" height="1" fill="#00ffff"/><rect x="360" y="438" width="2" height="1" fill="#0080ff"/><rect x="362" y="438" width="1" height="1" fill="#00ffff"/><rect x="363" y="438" width="3" height="1" fill="#0080ff"/><rect x="367" y="438" width="4" height="1" fill="#0080ff"/><rect x="371" y="438" width="1" height="1" fill="#00ffff"/><rect x="372" y="438" width="1" height="1" fill="#0080ff"/><rect x="374" y="438" width="1" height="1" fill="#00ffff"/><rect x="377" y="438" width="1" height="1" fill="#00ffff"/><rect x="378" y="438" width="1" height="1" fill="#0080ff"/><rect x="380" y="438" width="1" height="1" fill="#00ffff"/><rect x="382" y="438" width="1" height="1" fill="#00ffff"/><rect x="383" y="438" width="1" height="1" fill="#0080ff"/><rect x="384" y="438" width="1" height="1" fill="#00ffff"/><rect x="386" y="438" width="2" height="1" fill="#00ffff"/><rect x="388" y="438" width="2" height="1" fill="#0080ff"/><rect x="391" y="438" width="1" height="1" fill="#0080ff"/><rect x="392" y="438" width="1" height="1" fill="#00ffff"/><rect x="394" y="438" width="2" height="1" fill="#0080ff"/><rect x="396" y="438" width="1" height="1" fill="#00ffff"/><rect x="397" y="438" width="1" height="1" fill="#0080ff"/><rect x="399" y="438" width="1" height="1" fill="#0080ff"/><rect x="402" y="438" width="1" height="1" fill="#0080ff"/><rect x="410" y="438" width="1" height="1" fill="#0080ff"/><rect x="420" y="438" width="1" height="1" fill="#00ffff"/><rect x="431" y="438" width="1" height="1" fill="#0080ff"/><rect x="436" y="438" width="2" height="1" fill="#0080ff"/><rect x="440" y="438" width="1" height="1" fill="#0080ff"/><rect x="453" y="438" width="1" height="1" fill="#0080ff"/><rect x="455" y="438" width="1" height="1" fill="#00ffff"/><rect x="457" y="438" width="1" height="1" fill="#00ffff"/><rect x="494" y="438" width="1" height="1" fill="#0080ff"/><rect x="505" y="438" width="1" height="1" fill="#0080ff"/><rect x="511" y="438" width="1" height="1" fill="#00ffff"/><rect x="549" y="438" width="1" height="1" fill="#0080ff"/><rect x="70" y="439" width="1" height="1" fill="#0080ff"/><rect x="71" y="439" width="2" height="1" fill="#00ffff"/><rect x="73" y="439" width="2" height="1" fill="#0080ff"/><rect x="75" y="439" width="4" height="1" fill="#00ffff"/><rect x="79" y="439" width="1" height="1" fill="#0080ff"/><rect x="80" y="439" width="7" height="1" fill="#00ffff"/><rect x="87" y="439" width="1" height="1" fill="#0080ff"/><rect x="88" y="439" width="1" height="1" fill="#00ffff"/><rect x="89" y="439" width="1" height="1" fill="#0080ff"/><rect x="90" y="439" width="3" height="1" fill="#00ffff"/><rect x="93" y="439" width="1" height="1" fill="#0080ff"/><rect x="94" y="439" width="5" height="1" fill="#00ffff"/><rect x="99" y="439" width="1" height="1" fill="#0080ff"/><rect x="100" y="439" width="4" height="1" fill="#00ffff"/><rect x="104" y="439" width="3" height="1" fill="#0080ff"/><rect x="107" y="439" width="3" height="1" fill="#00ffff"/><rect x="110" y="439" width="2" height="1" fill="#0080ff"/><rect x="112" y="439" width="1" height="1" fill="#00ffff"/><rect x="113" y="439" width="3" height="1" fill="#0080ff"/><rect x="116" y="439" width="3" height="1" fill="#00ffff"/><rect x="119" y="439" width="2" height="1" fill="#0080ff"/><rect x="121" y="439" width="2" height="1" fill="#00ffff"/><rect x="123" y="439" width="2" height="1" fill="#0080ff"/><rect x="125" y="439" width="2" height="1" fill="#00ffff"/><rect x="127" y="439" width="2" height="1" fill="#0080ff"/><rect x="129" y="439" width="1" height="1" fill="#00ffff"/><rect x="130" y="439" width="2" height="1" fill="#0080ff"/><rect x="132" y="439" width="1" height="1" fill="#00ffff"/><rect x="133" y="439" width="1" height="1" fill="#0080ff"/><rect x="134" y="439" width="1" height="1" fill="#00ffff"/><rect x="135" y="439" width="3" height="1" fill="#0080ff"/><rect x="138" y="439" width="3" height="1" fill="#00ffff"/><rect x="141" y="439" width="3" height="1" fill="#0080ff"/><rect x="144" y="439" width="1" height="1" fill="#00ffff"/><rect x="145" y="439" width="2" height="1" fill="#0080ff"/><rect x="147" y="439" width="1" height="1" fill="#00ffff"/><rect x="148" y="439" width="2" height="1" fill="#0080ff"/><rect x="150" y="439" width="1" height="1" fill="#00ffff"/><rect x="151" y="439" width="1" height="1" fill="#0080ff"/><rect x="152" y="439" width="1" height="1" fill="#00ffff"/><rect x="153" y="439" width="1" height="1" fill="#0080ff"/><rect x="154" y="439" width="1" height="1" fill="#00ffff"/><rect x="155" y="439" width="1" height="1" fill="#0080ff"/><rect x="156" y="439" width="1" height="1" fill="#00ffff"/><rect x="157" y="439" width="1" height="1" fill="#0080ff"/><rect x="158" y="439" width="3" height="1" fill="#00ffff"/><rect x="161" y="439" width="1" height="1" fill="#0080ff"/><rect x="162" y="439" width="8" height="1" fill="#00ffff"/><rect x="170" y="439" width="1" height="1" fill="#0080ff"/><rect x="171" y="439" width="3" height="1" fill="#00ffff"/><rect x="174" y="439" width="2" height="1" fill="#0080ff"/><rect x="176" y="439" width="3" height="1" fill="#00ffff"/><rect x="179" y="439" width="2" height="1" fill="#0080ff"/><rect x="181" y="439" width="2" height="1" fill="#00ffff"/><rect x="183" y="439" width="1" height="1" fill="#0080ff"/><rect x="184" y="439" width="1" height="1" fill="#00ffff"/><rect x="185" y="439" width="1" height="1" fill="#0080ff"/><rect x="186" y="439" width="2" height="1" fill="#00ffff"/><rect x="188" y="439" width="1" height="1" fill="#0080ff"/><rect x="189" y="439" width="2" height="1" fill="#00ffff"/><rect x="191" y="439" width="1" height="1" fill="#0080ff"/><rect x="192" y="439" width="1" height="1" fill="#00ffff"/><rect x="193" y="439" width="2" height="1" fill="#0080ff"/><rect x="195" y="439" width="1" height="1" fill="#00ffff"/><rect x="196" y="439" width="1" height="1" fill="#0080ff"/><rect x="197" y="439" width="1" height="1" fill="#00ffff"/><rect x="198" y="439" width="1" height="1" fill="#0080ff"/><rect x="199" y="439" width="6" height="1" fill="#00ffff"/><rect x="205" y="439" width="3" height="1" fill="#0080ff"/><rect x="208" y="439" width="1" height="1" fill="#00ffff"/><rect x="209" y="439" width="1" height="1" fill="#0080ff"/><rect x="210" y="439" width="6" height="1" fill="#00ffff"/><rect x="216" y="439" width="1" height="1" fill="#0080ff"/><rect x="217" y="439" width="4" height="1" fill="#00ffff"/><rect x="221" y="439" width="3" height="1" fill="#0080ff"/><rect x="224" y="439" width="3" height="1" fill="#00ffff"/><rect x="227" y="439" width="1" height="1" fill="#0080ff"/><rect x="229" y="439" width="1" height="1" fill="#00ffff"/><rect x="230" y="439" width="1" height="1" fill="#0080ff"/><rect x="231" y="439" width="1" height="1" fill="#00ffff"/><rect x="232" y="439" width="1" height="1" fill="#0080ff"/><rect x="233" y="439" width="2" height="1" fill="#00ffff"/><rect x="235" y="439" width="1" height="1" fill="#0080ff"/><rect x="236" y="439" width="1" height="1" fill="#00ffff"/><rect x="237" y="439" width="1" height="1" fill="#0080ff"/><rect x="238" y="439" width="1" height="1" fill="#00ffff"/><rect x="239" y="439" width="1" height="1" fill="#0080ff"/><rect x="240" y="439" width="4" height="1" fill="#00ffff"/><rect x="244" y="439" width="1" height="1" fill="#0080ff"/><rect x="246" y="439" width="3" height="1" fill="#00ffff"/><rect x="249" y="439" width="1" height="1" fill="#0080ff"/><rect x="251" y="439" width="1" height="1" fill="#00ffff"/><rect x="252" y="439" width="3" height="1" fill="#0080ff"/><rect x="255" y="439" width="1" height="1" fill="#00ffff"/><rect x="256" y="439" width="1" height="1" fill="#0080ff"/><rect x="257" y="439" width="2" height="1" fill="#00ffff"/><rect x="259" y="439" width="1" height="1" fill="#0080ff"/><rect x="261" y="439" width="5" height="1" fill="#0080ff"/><rect x="266" y="439" width="1" height="1" fill="#00ffff"/><rect x="267" y="439" width="1" height="1" fill="#0080ff"/><rect x="268" y="439" width="1" height="1" fill="#00ffff"/><rect x="269" y="439" width="1" height="1" fill="#0080ff"/><rect x="270" y="439" width="2" height="1" fill="#00ffff"/><rect x="272" y="439" width="2" height="1" fill="#0080ff"/><rect x="274" y="439" width="1" height="1" fill="#00ffff"/><rect x="276" y="439" width="4" height="1" fill="#00ffff"/><rect x="280" y="439" width="3" height="1" fill="#0080ff"/><rect x="284" y="439" width="1" height="1" fill="#00ffff"/><rect x="285" y="439" width="3" height="1" fill="#0080ff"/><rect x="288" y="439" width="1" height="1" fill="#00ffff"/><rect x="289" y="439" width="1" height="1" fill="#0080ff"/><rect x="292" y="439" width="1" height="1" fill="#00ffff"/><rect x="294" y="439" width="5" height="1" fill="#00ffff"/><rect x="302" y="439" width="1" height="1" fill="#0080ff"/><rect x="303" y="439" width="1" height="1" fill="#00ffff"/><rect x="304" y="439" width="2" height="1" fill="#0080ff"/><rect x="306" y="439" width="2" height="1" fill="#00ffff"/><rect x="308" y="439" width="4" height="1" fill="#0080ff"/><rect x="312" y="439" width="5" height="1" fill="#00ffff"/><rect x="317" y="439" width="1" height="1" fill="#0080ff"/><rect x="319" y="439" width="4" height="1" fill="#0080ff"/><rect x="323" y="439" width="2" height="1" fill="#00ffff"/><rect x="325" y="439" width="1" height="1" fill="#0080ff"/><rect x="326" y="439" width="1" height="1" fill="#00ffff"/><rect x="327" y="439" width="1" height="1" fill="#0080ff"/><rect x="328" y="439" width="1" height="1" fill="#00ffff"/><rect x="329" y="439" width="2" height="1" fill="#0080ff"/><rect x="331" y="439" width="1" height="1" fill="#00ffff"/><rect x="332" y="439" width="1" height="1" fill="#0080ff"/><rect x="333" y="439" width="1" height="1" fill="#00ffff"/><rect x="334" y="439" width="1" height="1" fill="#0080ff"/><rect x="335" y="439" width="1" height="1" fill="#00ffff"/><rect x="337" y="439" width="1" height="1" fill="#00ffff"/><rect x="338" y="439" width="1" height="1" fill="#0080ff"/><rect x="340" y="439" width="1" height="1" fill="#0080ff"/><rect x="342" y="439" width="1" height="1" fill="#0080ff"/><rect x="344" y="439" width="2" height="1" fill="#0080ff"/><rect x="347" y="439" width="2" height="1" fill="#0080ff"/><rect x="350" y="439" width="1" height="1" fill="#0080ff"/><rect x="351" y="439" width="1" height="1" fill="#00ffff"/><rect x="352" y="439" width="2" height="1" fill="#0080ff"/><rect x="354" y="439" width="1" height="1" fill="#00ffff"/><rect x="356" y="439" width="1" height="1" fill="#0080ff"/><rect x="357" y="439" width="1" height="1" fill="#00ffff"/><rect x="358" y="439" width="3" height="1" fill="#0080ff"/><rect x="362" y="439" width="2" height="1" fill="#0080ff"/><rect x="364" y="439" width="1" height="1" fill="#00ffff"/><rect x="365" y="439" width="1" height="1" fill="#0080ff"/><rect x="368" y="439" width="5" height="1" fill="#0080ff"/><rect x="373" y="439" width="1" height="1" fill="#00ffff"/><rect x="374" y="439" width="1" height="1" fill="#0080ff"/><rect x="376" y="439" width="1" height="1" fill="#0080ff"/><rect x="378" y="439" width="1" height="1" fill="#0080ff"/><rect x="380" y="439" width="1" height="1" fill="#00ffff"/><rect x="382" y="439" width="1" height="1" fill="#0080ff"/><rect x="385" y="439" width="1" height="1" fill="#0080ff"/><rect x="386" y="439" width="1" height="1" fill="#00ffff"/><rect x="387" y="439" width="1" height="1" fill="#0080ff"/><rect x="388" y="439" width="1" height="1" fill="#00ffff"/><rect x="390" y="439" width="2" height="1" fill="#0080ff"/><rect x="393" y="439" width="1" height="1" fill="#0080ff"/><rect x="394" y="439" width="1" height="1" fill="#00ffff"/><rect x="396" y="439" width="1" height="1" fill="#0080ff"/><rect x="398" y="439" width="1" height="1" fill="#0080ff"/><rect x="402" y="439" width="1" height="1" fill="#00ffff"/><rect x="404" y="439" width="1" height="1" fill="#00ffff"/><rect x="405" y="439" width="1" height="1" fill="#0080ff"/><rect x="409" y="439" width="1" height="1" fill="#00ffff"/><rect x="414" y="439" width="1" height="1" fill="#00ffff"/><rect x="415" y="439" width="1" height="1" fill="#0080ff"/><rect x="420" y="439" width="1" height="1" fill="#0080ff"/><rect x="425" y="439" width="1" height="1" fill="#00ffff"/><rect x="445" y="439" width="1" height="1" fill="#00ffff"/><rect x="446" y="439" width="1" height="1" fill="#0080ff"/><rect x="449" y="439" width="1" height="1" fill="#0080ff"/><rect x="452" y="439" width="1" height="1" fill="#00ffff"/><rect x="459" y="439" width="1" height="1" fill="#0080ff"/><rect x="463" y="439" width="1" height="1" fill="#00ffff"/><rect x="465" y="439" width="1" height="1" fill="#00ffff"/><rect x="521" y="439" width="1" height="1" fill="#0080ff"/><rect x="553" y="439" width="1" height="1" fill="#0080ff"/><rect x="70" y="440" width="1" height="1" fill="#00ffff"/><rect x="71" y="440" width="1" height="1" fill="#0080ff"/><rect x="72" y="440" width="4" height="1" fill="#00ffff"/><rect x="76" y="440" width="1" height="1" fill="#0080ff"/><rect x="77" y="440" width="2" height="1" fill="#00ffff"/><rect x="79" y="440" width="1" height="1" fill="#0080ff"/><rect x="80" y="440" width="6" height="1" fill="#00ffff"/><rect x="86" y="440" width="1" height="1" fill="#0080ff"/><rect x="87" y="440" width="8" height="1" fill="#00ffff"/><rect x="95" y="440" width="1" height="1" fill="#0080ff"/><rect x="96" y="440" width="1" height="1" fill="#00ffff"/><rect x="97" y="440" width="1" height="1" fill="#0080ff"/><rect x="98" y="440" width="3" height="1" fill="#00ffff"/><rect x="101" y="440" width="1" height="1" fill="#0080ff"/><rect x="102" y="440" width="4" height="1" fill="#00ffff"/><rect x="106" y="440" width="1" height="1" fill="#0080ff"/><rect x="107" y="440" width="1" height="1" fill="#00ffff"/><rect x="108" y="440" width="1" height="1" fill="#0080ff"/><rect x="109" y="440" width="1" height="1" fill="#00ffff"/><rect x="110" y="440" width="1" height="1" fill="#0080ff"/><rect x="111" y="440" width="1" height="1" fill="#00ffff"/><rect x="112" y="440" width="1" height="1" fill="#0080ff"/><rect x="113" y="440" width="4" height="1" fill="#00ffff"/><rect x="117" y="440" width="2" height="1" fill="#0080ff"/><rect x="119" y="440" width="3" height="1" fill="#00ffff"/><rect x="122" y="440" width="1" height="1" fill="#0080ff"/><rect x="123" y="440" width="3" height="1" fill="#00ffff"/><rect x="126" y="440" width="3" height="1" fill="#0080ff"/><rect x="129" y="440" width="3" height="1" fill="#00ffff"/><rect x="132" y="440" width="2" height="1" fill="#0080ff"/><rect x="134" y="440" width="4" height="1" fill="#00ffff"/><rect x="138" y="440" width="5" height="1" fill="#0080ff"/><rect x="143" y="440" width="1" height="1" fill="#00ffff"/><rect x="144" y="440" width="1" height="1" fill="#0080ff"/><rect x="145" y="440" width="3" height="1" fill="#00ffff"/><rect x="148" y="440" width="1" height="1" fill="#0080ff"/><rect x="149" y="440" width="5" height="1" fill="#00ffff"/><rect x="154" y="440" width="1" height="1" fill="#0080ff"/><rect x="155" y="440" width="10" height="1" fill="#00ffff"/><rect x="165" y="440" width="2" height="1" fill="#0080ff"/><rect x="167" y="440" width="2" height="1" fill="#00ffff"/><rect x="169" y="440" width="3" height="1" fill="#0080ff"/><rect x="172" y="440" width="3" height="1" fill="#00ffff"/><rect x="175" y="440" width="4" height="1" fill="#0080ff"/><rect x="179" y="440" width="2" height="1" fill="#00ffff"/><rect x="181" y="440" width="1" height="1" fill="#0080ff"/><rect x="182" y="440" width="1" height="1" fill="#00ffff"/><rect x="183" y="440" width="2" height="1" fill="#0080ff"/><rect x="185" y="440" width="3" height="1" fill="#00ffff"/><rect x="188" y="440" width="1" height="1" fill="#0080ff"/><rect x="189" y="440" width="1" height="1" fill="#00ffff"/><rect x="190" y="440" width="1" height="1" fill="#0080ff"/><rect x="191" y="440" width="5" height="1" fill="#00ffff"/><rect x="196" y="440" width="3" height="1" fill="#0080ff"/><rect x="199" y="440" width="2" height="1" fill="#00ffff"/><rect x="201" y="440" width="1" height="1" fill="#0080ff"/><rect x="202" y="440" width="1" height="1" fill="#00ffff"/><rect x="203" y="440" width="1" height="1" fill="#0080ff"/><rect x="204" y="440" width="1" height="1" fill="#00ffff"/><rect x="205" y="440" width="2" height="1" fill="#0080ff"/><rect x="207" y="440" width="9" height="1" fill="#00ffff"/><rect x="216" y="440" width="2" height="1" fill="#0080ff"/><rect x="218" y="440" width="3" height="1" fill="#00ffff"/><rect x="222" y="440" width="1" height="1" fill="#00ffff"/><rect x="223" y="440" width="1" height="1" fill="#0080ff"/><rect x="224" y="440" width="2" height="1" fill="#00ffff"/><rect x="226" y="440" width="1" height="1" fill="#0080ff"/><rect x="228" y="440" width="1" height="1" fill="#00ffff"/><rect x="229" y="440" width="1" height="1" fill="#0080ff"/><rect x="230" y="440" width="4" height="1" fill="#00ffff"/><rect x="234" y="440" width="1" height="1" fill="#0080ff"/><rect x="235" y="440" width="3" height="1" fill="#00ffff"/><rect x="238" y="440" width="1" height="1" fill="#0080ff"/><rect x="239" y="440" width="3" height="1" fill="#00ffff"/><rect x="242" y="440" width="3" height="1" fill="#0080ff"/><rect x="245" y="440" width="2" height="1" fill="#00ffff"/><rect x="247" y="440" width="1" height="1" fill="#0080ff"/><rect x="248" y="440" width="1" height="1" fill="#00ffff"/><rect x="249" y="440" width="2" height="1" fill="#0080ff"/><rect x="251" y="440" width="2" height="1" fill="#00ffff"/><rect x="253" y="440" width="1" height="1" fill="#0080ff"/><rect x="254" y="440" width="1" height="1" fill="#00ffff"/><rect x="255" y="440" width="1" height="1" fill="#0080ff"/><rect x="257" y="440" width="1" height="1" fill="#0080ff"/><rect x="259" y="440" width="2" height="1" fill="#0080ff"/><rect x="261" y="440" width="1" height="1" fill="#00ffff"/><rect x="262" y="440" width="2" height="1" fill="#0080ff"/><rect x="264" y="440" width="1" height="1" fill="#00ffff"/><rect x="266" y="440" width="1" height="1" fill="#0080ff"/><rect x="267" y="440" width="3" height="1" fill="#00ffff"/><rect x="270" y="440" width="1" height="1" fill="#0080ff"/><rect x="271" y="440" width="1" height="1" fill="#00ffff"/><rect x="272" y="440" width="4" height="1" fill="#0080ff"/><rect x="276" y="440" width="1" height="1" fill="#00ffff"/><rect x="277" y="440" width="7" height="1" fill="#0080ff"/><rect x="285" y="440" width="4" height="1" fill="#0080ff"/><rect x="289" y="440" width="1" height="1" fill="#00ffff"/><rect x="290" y="440" width="3" height="1" fill="#0080ff"/><rect x="293" y="440" width="2" height="1" fill="#00ffff"/><rect x="295" y="440" width="2" height="1" fill="#0080ff"/><rect x="297" y="440" width="1" height="1" fill="#00ffff"/><rect x="298" y="440" width="6" height="1" fill="#0080ff"/><rect x="304" y="440" width="1" height="1" fill="#00ffff"/><rect x="305" y="440" width="4" height="1" fill="#0080ff"/><rect x="309" y="440" width="1" height="1" fill="#00ffff"/><rect x="311" y="440" width="1" height="1" fill="#0080ff"/><rect x="312" y="440" width="2" height="1" fill="#00ffff"/><rect x="314" y="440" width="3" height="1" fill="#0080ff"/><rect x="317" y="440" width="1" height="1" fill="#00ffff"/><rect x="319" y="440" width="2" height="1" fill="#0080ff"/><rect x="321" y="440" width="1" height="1" fill="#00ffff"/><rect x="322" y="440" width="1" height="1" fill="#0080ff"/><rect x="324" y="440" width="3" height="1" fill="#0080ff"/><rect x="328" y="440" width="2" height="1" fill="#0080ff"/><rect x="330" y="440" width="1" height="1" fill="#00ffff"/><rect x="331" y="440" width="4" height="1" fill="#0080ff"/><rect x="335" y="440" width="1" height="1" fill="#00ffff"/><rect x="338" y="440" width="1" height="1" fill="#00ffff"/><rect x="340" y="440" width="3" height="1" fill="#00ffff"/><rect x="343" y="440" width="2" height="1" fill="#0080ff"/><rect x="345" y="440" width="2" height="1" fill="#00ffff"/><rect x="347" y="440" width="2" height="1" fill="#0080ff"/><rect x="349" y="440" width="1" height="1" fill="#00ffff"/><rect x="350" y="440" width="1" height="1" fill="#0080ff"/><rect x="351" y="440" width="1" height="1" fill="#00ffff"/><rect x="353" y="440" width="1" height="1" fill="#0080ff"/><rect x="354" y="440" width="2" height="1" fill="#00ffff"/><rect x="356" y="440" width="4" height="1" fill="#0080ff"/><rect x="362" y="440" width="1" height="1" fill="#0080ff"/><rect x="363" y="440" width="1" height="1" fill="#00ffff"/><rect x="364" y="440" width="1" height="1" fill="#0080ff"/><rect x="365" y="440" width="1" height="1" fill="#00ffff"/><rect x="366" y="440" width="4" height="1" fill="#0080ff"/><rect x="370" y="440" width="1" height="1" fill="#00ffff"/><rect x="371" y="440" width="1" height="1" fill="#0080ff"/><rect x="373" y="440" width="4" height="1" fill="#0080ff"/><rect x="379" y="440" width="1" height="1" fill="#0080ff"/><rect x="381" y="440" width="2" height="1" fill="#0080ff"/><rect x="384" y="440" width="8" height="1" fill="#0080ff"/><rect x="393" y="440" width="1" height="1" fill="#00ffff"/><rect x="394" y="440" width="1" height="1" fill="#0080ff"/><rect x="397" y="440" width="1" height="1" fill="#00ffff"/><rect x="399" y="440" width="2" height="1" fill="#00ffff"/><rect x="405" y="440" width="1" height="1" fill="#00ffff"/><rect x="412" y="440" width="1" height="1" fill="#0080ff"/><rect x="415" y="440" width="1" height="1" fill="#00ffff"/><rect x="418" y="440" width="1" height="1" fill="#00ffff"/><rect x="420" y="440" width="1" height="1" fill="#00ffff"/><rect x="424" y="440" width="2" height="1" fill="#0080ff"/><rect x="427" y="440" width="1" height="1" fill="#00ffff"/><rect x="431" y="440" width="1" height="1" fill="#00ffff"/><rect x="442" y="440" width="1" height="1" fill="#0080ff"/><rect x="447" y="440" width="1" height="1" fill="#0080ff"/><rect x="453" y="440" width="1" height="1" fill="#0080ff"/><rect x="467" y="440" width="1" height="1" fill="#0080ff"/><rect x="471" y="440" width="1" height="1" fill="#00ffff"/><rect x="472" y="440" width="1" height="1" fill="#0080ff"/><rect x="473" y="440" width="1" height="1" fill="#00ffff"/><rect x="476" y="440" width="1" height="1" fill="#0080ff"/><rect x="479" y="440" width="1" height="1" fill="#0080ff"/><rect x="488" y="440" width="1" height="1" fill="#0080ff"/><rect x="497" y="440" width="1" height="1" fill="#00ffff"/><rect x="503" y="440" width="1" height="1" fill="#0080ff"/><rect x="513" y="440" width="1" height="1" fill="#00ffff"/><rect x="70" y="441" width="7" height="1" fill="#00ffff"/><rect x="77" y="441" width="1" height="1" fill="#0080ff"/><rect x="78" y="441" width="2" height="1" fill="#00ffff"/><rect x="80" y="441" width="2" height="1" fill="#0080ff"/><rect x="82" y="441" width="13" height="1" fill="#00ffff"/><rect x="95" y="441" width="1" height="1" fill="#0080ff"/><rect x="96" y="441" width="11" height="1" fill="#00ffff"/><rect x="107" y="441" width="2" height="1" fill="#0080ff"/><rect x="109" y="441" width="22" height="1" fill="#00ffff"/><rect x="131" y="441" width="1" height="1" fill="#0080ff"/><rect x="132" y="441" width="2" height="1" fill="#00ffff"/><rect x="134" y="441" width="1" height="1" fill="#0080ff"/><rect x="135" y="441" width="7" height="1" fill="#00ffff"/><rect x="142" y="441" width="1" height="1" fill="#0080ff"/><rect x="143" y="441" width="11" height="1" fill="#00ffff"/><rect x="154" y="441" width="1" height="1" fill="#0080ff"/><rect x="155" y="441" width="22" height="1" fill="#00ffff"/><rect x="177" y="441" width="2" height="1" fill="#0080ff"/><rect x="179" y="441" width="5" height="1" fill="#00ffff"/><rect x="184" y="441" width="1" height="1" fill="#0080ff"/><rect x="185" y="441" width="4" height="1" fill="#00ffff"/><rect x="189" y="441" width="1" height="1" fill="#0080ff"/><rect x="190" y="441" width="2" height="1" fill="#00ffff"/><rect x="192" y="441" width="1" height="1" fill="#0080ff"/><rect x="193" y="441" width="4" height="1" fill="#00ffff"/><rect x="197" y="441" width="1" height="1" fill="#0080ff"/><rect x="198" y="441" width="6" height="1" fill="#00ffff"/><rect x="205" y="441" width="6" height="1" fill="#00ffff"/><rect x="211" y="441" width="1" height="1" fill="#0080ff"/><rect x="212" y="441" width="2" height="1" fill="#00ffff"/><rect x="215" y="441" width="9" height="1" fill="#00ffff"/><rect x="226" y="441" width="1" height="1" fill="#00ffff"/><rect x="228" y="441" width="3" height="1" fill="#00ffff"/><rect x="231" y="441" width="1" height="1" fill="#0080ff"/><rect x="232" y="441" width="1" height="1" fill="#00ffff"/><rect x="234" y="441" width="6" height="1" fill="#00ffff"/><rect x="240" y="441" width="1" height="1" fill="#0080ff"/><rect x="241" y="441" width="4" height="1" fill="#00ffff"/><rect x="245" y="441" width="1" height="1" fill="#0080ff"/><rect x="246" y="441" width="5" height="1" fill="#00ffff"/><rect x="251" y="441" width="1" height="1" fill="#0080ff"/><rect x="252" y="441" width="2" height="1" fill="#00ffff"/><rect x="255" y="441" width="3" height="1" fill="#00ffff"/><rect x="259" y="441" width="1" height="1" fill="#00ffff"/><rect x="260" y="441" width="1" height="1" fill="#0080ff"/><rect x="261" y="441" width="9" height="1" fill="#00ffff"/><rect x="272" y="441" width="8" height="1" fill="#00ffff"/><rect x="280" y="441" width="1" height="1" fill="#0080ff"/><rect x="282" y="441" width="6" height="1" fill="#00ffff"/><rect x="289" y="441" width="6" height="1" fill="#00ffff"/><rect x="296" y="441" width="1" height="1" fill="#00ffff"/><rect x="298" y="441" width="6" height="1" fill="#00ffff"/><rect x="307" y="441" width="1" height="1" fill="#0080ff"/><rect x="308" y="441" width="6" height="1" fill="#00ffff"/><rect x="315" y="441" width="4" height="1" fill="#00ffff"/><rect x="325" y="441" width="2" height="1" fill="#00ffff"/><rect x="328" y="441" width="2" height="1" fill="#00ffff"/><rect x="330" y="441" width="1" height="1" fill="#0080ff"/><rect x="331" y="441" width="2" height="1" fill="#00ffff"/><rect x="335" y="441" width="2" height="1" fill="#00ffff"/><rect x="338" y="441" width="1" height="1" fill="#0080ff"/><rect x="341" y="441" width="4" height="1" fill="#00ffff"/><rect x="345" y="441" width="1" height="1" fill="#0080ff"/><rect x="349" y="441" width="2" height="1" fill="#00ffff"/><rect x="352" y="441" width="3" height="1" fill="#00ffff"/><rect x="357" y="441" width="1" height="1" fill="#00ffff"/><rect x="359" y="441" width="2" height="1" fill="#00ffff"/><rect x="362" y="441" width="2" height="1" fill="#00ffff"/><rect x="365" y="441" width="1" height="1" fill="#00ffff"/><rect x="367" y="441" width="2" height="1" fill="#00ffff"/><rect x="371" y="441" width="1" height="1" fill="#00ffff"/><rect x="373" y="441" width="2" height="1" fill="#00ffff"/><rect x="376" y="441" width="1" height="1" fill="#00ffff"/><rect x="378" y="441" width="1" height="1" fill="#00ffff"/><rect x="381" y="441" width="1" height="1" fill="#00ffff"/><rect x="383" y="441" width="1" height="1" fill="#00ffff"/><rect x="388" y="441" width="1" height="1" fill="#00ffff"/><rect x="391" y="441" width="1" height="1" fill="#00ffff"/><rect x="392" y="441" width="1" height="1" fill="#0080ff"/><rect x="393" y="441" width="1" height="1" fill="#00ffff"/><rect x="397" y="441" width="2" height="1" fill="#00ffff"/><rect x="399" y="441" width="1" height="1" fill="#0080ff"/><rect x="401" y="441" width="3" height="1" fill="#00ffff"/><rect x="406" y="441" width="1" height="1" fill="#00ffff"/><rect x="413" y="441" width="1" height="1" fill="#00ffff"/><rect x="415" y="441" width="3" height="1" fill="#00ffff"/><rect x="420" y="441" width="2" height="1" fill="#00ffff"/><rect x="422" y="441" width="1" height="1" fill="#0080ff"/><rect x="424" y="441" width="1" height="1" fill="#00ffff"/><rect x="428" y="441" width="3" height="1" fill="#00ffff"/><rect x="433" y="441" width="2" height="1" fill="#00ffff"/><rect x="447" y="441" width="1" height="1" fill="#00ffff"/><rect x="451" y="441" width="1" height="1" fill="#0080ff"/><rect x="454" y="441" width="1" height="1" fill="#00ffff"/><rect x="457" y="441" width="1" height="1" fill="#00ffff"/><rect x="468" y="441" width="1" height="1" fill="#00ffff"/><rect x="477" y="441" width="1" height="1" fill="#00ffff"/><rect x="483" y="441" width="1" height="1" fill="#00ffff"/><rect x="491" y="441" width="1" height="1" fill="#00ffff"/><rect x="494" y="441" width="1" height="1" fill="#00ffff"/><rect x="505" y="441" width="1" height="1" fill="#00ffff"/><rect x="515" y="441" width="2" height="1" fill="#00ffff"/><rect x="535" y="441" width="1" height="1" fill="#00ffff"/><rect x="541" y="441" width="1" height="1" fill="#00ffff"/><rect x="556" y="441" width="1" height="1" fill="#00ffff"/><rect x="70" y="442" width="4" height="1" fill="#00ff00"/><rect x="74" y="442" width="1" height="1" fill="#ffff00"/><rect x="75" y="442" width="1" height="1" fill="#00ff00"/><rect x="76" y="442" width="3" height="1" fill="#00ffff"/><rect x="79" y="442" width="1" height="1" fill="#ffff00"/><rect x="80" y="442" width="1" height="1" fill="#00ff00"/><rect x="81" y="442" width="1" height="1" fill="#00ffff"/><rect x="82" y="442" width="1" height="1" fill="#00ff00"/><rect x="83" y="442" width="1" height="1" fill="#ffff00"/><rect x="84" y="442" width="1" height="1" fill="#00ffff"/><rect x="85" y="442" width="3" height="1" fill="#00ff00"/><rect x="88" y="442" width="1" height="1" fill="#ff0000"/><rect x="89" y="442" width="1" height="1" fill="#00ff00"/><rect x="90" y="442" width="1" height="1" fill="#00ffff"/><rect x="91" y="442" width="1" height="1" fill="#00ff00"/><rect x="92" y="442" width="1" height="1" fill="#00ffff"/><rect x="93" y="442" width="3" height="1" fill="#00ff00"/><rect x="96" y="442" width="1" height="1" fill="#ffff00"/><rect x="97" y="442" width="1" height="1" fill="#00ffff"/><rect x="98" y="442" width="1" height="1" fill="#ffff00"/><rect x="99" y="442" width="1" height="1" fill="#00ff00"/><rect x="100" y="442" width="1" height="1" fill="#ffff00"/><rect x="101" y="442" width="9" height="1" fill="#00ff00"/><rect x="110" y="442" width="2" height="1" fill="#00ffff"/><rect x="112" y="442" width="1" height="1" fill="#ff0000"/><rect x="113" y="442" width="12" height="1" fill="#00ff00"/><rect x="125" y="442" width="1" height="1" fill="#00ffff"/><rect x="126" y="442" width="3" height="1" fill="#00ff00"/><rect x="129" y="442" width="1" height="1" fill="#00ffff"/><rect x="130" y="442" width="1" height="1" fill="#ff0000"/><rect x="131" y="442" width="1" height="1" fill="#ffff00"/><rect x="132" y="442" width="3" height="1" fill="#00ff00"/><rect x="135" y="442" width="1" height="1" fill="#ff0000"/><rect x="136" y="442" width="1" height="1" fill="#00ff00"/><rect x="137" y="442" width="2" height="1" fill="#00ffff"/><rect x="139" y="442" width="1" height="1" fill="#00ff00"/><rect x="140" y="442" width="2" height="1" fill="#00ffff"/><rect x="142" y="442" width="1" height="1" fill="#ff0000"/><rect x="143" y="442" width="2" height="1" fill="#00ff00"/><rect x="145" y="442" width="1" height="1" fill="#00ffff"/><rect x="146" y="442" width="3" height="1" fill="#00ff00"/><rect x="149" y="442" width="2" height="1" fill="#00ffff"/><rect x="151" y="442" width="1" height="1" fill="#00ff00"/><rect x="152" y="442" width="2" height="1" fill="#00ffff"/><rect x="154" y="442" width="1" height="1" fill="#ff0000"/><rect x="155" y="442" width="1" height="1" fill="#00ff00"/><rect x="156" y="442" width="1" height="1" fill="#ff0000"/><rect x="157" y="442" width="1" height="1" fill="#00ff00"/><rect x="158" y="442" width="1" height="1" fill="#ffff00"/><rect x="159" y="442" width="2" height="1" fill="#00ffff"/><rect x="161" y="442" width="5" height="1" fill="#00ff00"/><rect x="166" y="442" width="1" height="1" fill="#ffff00"/><rect x="167" y="442" width="3" height="1" fill="#00ff00"/><rect x="170" y="442" width="1" height="1" fill="#00ffff"/><rect x="171" y="442" width="1" height="1" fill="#00ff00"/><rect x="172" y="442" width="3" height="1" fill="#00ffff"/><rect x="175" y="442" width="2" height="1" fill="#00ff00"/><rect x="177" y="442" width="2" height="1" fill="#00ffff"/><rect x="179" y="442" width="2" height="1" fill="#00ff00"/><rect x="181" y="442" width="1" height="1" fill="#00ffff"/><rect x="182" y="442" width="4" height="1" fill="#00ff00"/><rect x="186" y="442" width="1" height="1" fill="#ff0000"/><rect x="187" y="442" width="1" height="1" fill="#00ff00"/><rect x="188" y="442" width="1" height="1" fill="#ff0000"/><rect x="189" y="442" width="5" height="1" fill="#00ff00"/><rect x="194" y="442" width="1" height="1" fill="#00ffff"/><rect x="195" y="442" width="1" height="1" fill="#00ff00"/><rect x="196" y="442" width="1" height="1" fill="#00ffff"/><rect x="197" y="442" width="1" height="1" fill="#00ff00"/><rect x="198" y="442" width="1" height="1" fill="#ffff00"/><rect x="199" y="442" width="1" height="1" fill="#00ff00"/><rect x="200" y="442" width="3" height="1" fill="#00ffff"/><rect x="203" y="442" width="2" height="1" fill="#00ff00"/><rect x="205" y="442" width="1" height="1" fill="#00ffff"/><rect x="206" y="442" width="1" height="1" fill="#00ff00"/><rect x="207" y="442" width="1" height="1" fill="#00ffff"/><rect x="208" y="442" width="2" height="1" fill="#00ff00"/><rect x="210" y="442" width="1" height="1" fill="#00ffff"/><rect x="211" y="442" width="4" height="1" fill="#00ff00"/><rect x="215" y="442" width="1" height="1" fill="#00ffff"/><rect x="216" y="442" width="2" height="1" fill="#00ff00"/><rect x="218" y="442" width="1" height="1" fill="#00ffff"/><rect x="219" y="442" width="1" height="1" fill="#00ff00"/><rect x="220" y="442" width="3" height="1" fill="#00ffff"/><rect x="223" y="442" width="4" height="1" fill="#00ff00"/><rect x="227" y="442" width="1" height="1" fill="#ffff00"/><rect x="228" y="442" width="3" height="1" fill="#00ff00"/><rect x="231" y="442" width="2" height="1" fill="#00ffff"/><rect x="233" y="442" width="2" height="1" fill="#00ff00"/><rect x="235" y="442" width="1" height="1" fill="#00ffff"/><rect x="236" y="442" width="1" height="1" fill="#00ff00"/><rect x="237" y="442" width="1" height="1" fill="#00ffff"/><rect x="238" y="442" width="1" height="1" fill="#00ff00"/><rect x="239" y="442" width="1" height="1" fill="#ffff00"/><rect x="240" y="442" width="3" height="1" fill="#00ff00"/><rect x="243" y="442" width="1" height="1" fill="#ff0000"/><rect x="244" y="442" width="3" height="1" fill="#00ff00"/><rect x="247" y="442" width="1" height="1" fill="#00ffff"/><rect x="248" y="442" width="3" height="1" fill="#00ff00"/><rect x="251" y="442" width="1" height="1" fill="#00ffff"/><rect x="252" y="442" width="2" height="1" fill="#00ff00"/><rect x="254" y="442" width="1" height="1" fill="#00ffff"/><rect x="255" y="442" width="3" height="1" fill="#00ff00"/><rect x="258" y="442" width="1" height="1" fill="#ff0000"/><rect x="259" y="442" width="1" height="1" fill="#00ff00"/><rect x="260" y="442" width="1" height="1" fill="#00ffff"/><rect x="261" y="442" width="3" height="1" fill="#00ff00"/><rect x="264" y="442" width="1" height="1" fill="#00ffff"/><rect x="265" y="442" width="4" height="1" fill="#00ff00"/><rect x="269" y="442" width="1" height="1" fill="#ff0000"/><rect x="270" y="442" width="1" height="1" fill="#00ffff"/><rect x="271" y="442" width="3" height="1" fill="#00ff00"/><rect x="274" y="442" width="1" height="1" fill="#00ffff"/><rect x="275" y="442" width="2" height="1" fill="#00ff00"/><rect x="277" y="442" width="1" height="1" fill="#ff0000"/><rect x="278" y="442" width="1" height="1" fill="#00ffff"/><rect x="279" y="442" width="5" height="1" fill="#00ff00"/><rect x="284" y="442" width="1" height="1" fill="#00ffff"/><rect x="285" y="442" width="1" height="1" fill="#00ff00"/><rect x="286" y="442" width="5" height="1" fill="#00ffff"/><rect x="291" y="442" width="1" height="1" fill="#00ff00"/><rect x="292" y="442" width="3" height="1" fill="#00ffff"/><rect x="295" y="442" width="1" height="1" fill="#ffff00"/><rect x="296" y="442" width="1" height="1" fill="#00ffff"/><rect x="297" y="442" width="3" height="1" fill="#00ff00"/><rect x="300" y="442" width="1" height="1" fill="#00ffff"/><rect x="301" y="442" width="3" height="1" fill="#00ff00"/><rect x="304" y="442" width="1" height="1" fill="#00ffff"/><rect x="305" y="442" width="1" height="1" fill="#00ff00"/><rect x="306" y="442" width="1" height="1" fill="#00ffff"/><rect x="307" y="442" width="1" height="1" fill="#00ff00"/><rect x="308" y="442" width="1" height="1" fill="#00ffff"/><rect x="309" y="442" width="1" height="1" fill="#00ff00"/><rect x="310" y="442" width="2" height="1" fill="#00ffff"/><rect x="312" y="442" width="5" height="1" fill="#00ff00"/><rect x="317" y="442" width="1" height="1" fill="#00ffff"/><rect x="318" y="442" width="1" height="1" fill="#00ff00"/><rect x="319" y="442" width="1" height="1" fill="#ff0000"/><rect x="320" y="442" width="5" height="1" fill="#00ff00"/><rect x="325" y="442" width="1" height="1" fill="#00ffff"/><rect x="326" y="442" width="1" height="1" fill="#00ff00"/><rect x="327" y="442" width="2" height="1" fill="#00ffff"/><rect x="329" y="442" width="1" height="1" fill="#00ff00"/><rect x="330" y="442" width="1" height="1" fill="#00ffff"/><rect x="331" y="442" width="5" height="1" fill="#00ff00"/><rect x="336" y="442" width="1" height="1" fill="#ff0000"/><rect x="337" y="442" width="1" height="1" fill="#00ffff"/><rect x="338" y="442" width="1" height="1" fill="#ffff00"/><rect x="339" y="442" width="1" height="1" fill="#00ffff"/><rect x="340" y="442" width="3" height="1" fill="#00ff00"/><rect x="343" y="442" width="1" height="1" fill="#ffff00"/><rect x="344" y="442" width="2" height="1" fill="#00ff00"/><rect x="346" y="442" width="1" height="1" fill="#00ffff"/><rect x="347" y="442" width="5" height="1" fill="#00ff00"/><rect x="352" y="442" width="1" height="1" fill="#00ffff"/><rect x="353" y="442" width="4" height="1" fill="#00ff00"/><rect x="357" y="442" width="2" height="1" fill="#00ffff"/><rect x="359" y="442" width="1" height="1" fill="#00ff00"/><rect x="360" y="442" width="2" height="1" fill="#ffff00"/><rect x="362" y="442" width="1" height="1" fill="#00ff00"/><rect x="363" y="442" width="1" height="1" fill="#00ffff"/><rect x="364" y="442" width="1" height="1" fill="#00ff00"/><rect x="365" y="442" width="1" height="1" fill="#00ffff"/><rect x="367" y="442" width="1" height="1" fill="#00ffff"/><rect x="368" y="442" width="7" height="1" fill="#00ff00"/><rect x="375" y="442" width="1" height="1" fill="#ff0000"/><rect x="376" y="442" width="1" height="1" fill="#ffff00"/><rect x="377" y="442" width="3" height="1" fill="#00ff00"/><rect x="380" y="442" width="1" height="1" fill="#ff0000"/><rect x="381" y="442" width="3" height="1" fill="#00ff00"/><rect x="384" y="442" width="1" height="1" fill="#00ffff"/><rect x="385" y="442" width="1" height="1" fill="#00ff00"/><rect x="386" y="442" width="2" height="1" fill="#00ffff"/><rect x="388" y="442" width="2" height="1" fill="#00ff00"/><rect x="390" y="442" width="1" height="1" fill="#00ffff"/><rect x="391" y="442" width="1" height="1" fill="#ffff00"/><rect x="392" y="442" width="1" height="1" fill="#00ff00"/><rect x="393" y="442" width="2" height="1" fill="#00ffff"/><rect x="395" y="442" width="1" height="1" fill="#ffff00"/><rect x="396" y="442" width="2" height="1" fill="#00ff00"/><rect x="398" y="442" width="1" height="1" fill="#00ffff"/><rect x="399" y="442" width="2" height="1" fill="#00ff00"/><rect x="401" y="442" width="1" height="1" fill="#ff0000"/><rect x="402" y="442" width="1" height="1" fill="#00ff00"/><rect x="404" y="442" width="2" height="1" fill="#00ff00"/><rect x="406" y="442" width="1" height="1" fill="#ff0000"/><rect x="407" y="442" width="2" height="1" fill="#00ff00"/><rect x="410" y="442" width="1" height="1" fill="#00ff00"/><rect x="411" y="442" width="1" height="1" fill="#ff0000"/><rect x="412" y="442" width="1" height="1" fill="#ffff00"/><rect x="413" y="442" width="1" height="1" fill="#00ff00"/><rect x="414" y="442" width="1" height="1" fill="#ff0000"/><rect x="415" y="442" width="2" height="1" fill="#00ff00"/><rect x="417" y="442" width="1" height="1" fill="#ffff00"/><rect x="420" y="442" width="2" height="1" fill="#00ffff"/><rect x="422" y="442" width="1" height="1" fill="#00ff00"/><rect x="423" y="442" width="1" height="1" fill="#ff0000"/><rect x="424" y="442" width="1" height="1" fill="#00ff00"/><rect x="425" y="442" width="1" height="1" fill="#ff0000"/><rect x="426" y="442" width="1" height="1" fill="#00ffff"/><rect x="427" y="442" width="2" height="1" fill="#00ff00"/><rect x="429" y="442" width="1" height="1" fill="#ffff00"/><rect x="430" y="442" width="1" height="1" fill="#00ff00"/><rect x="431" y="442" width="1" height="1" fill="#ffff00"/><rect x="432" y="442" width="2" height="1" fill="#00ffff"/><rect x="434" y="442" width="2" height="1" fill="#00ff00"/><rect x="438" y="442" width="2" height="1" fill="#00ff00"/><rect x="440" y="442" width="1" height="1" fill="#ffff00"/><rect x="441" y="442" width="2" height="1" fill="#00ff00"/><rect x="443" y="442" width="1" height="1" fill="#ff0000"/><rect x="444" y="442" width="1" height="1" fill="#00ff00"/><rect x="446" y="442" width="1" height="1" fill="#00ff00"/><rect x="447" y="442" width="1" height="1" fill="#00ffff"/><rect x="450" y="442" width="3" height="1" fill="#00ff00"/><rect x="453" y="442" width="1" height="1" fill="#ff0000"/><rect x="454" y="442" width="4" height="1" fill="#00ff00"/><rect x="461" y="442" width="2" height="1" fill="#00ff00"/><rect x="464" y="442" width="1" height="1" fill="#ff0000"/><rect x="467" y="442" width="3" height="1" fill="#00ff00"/><rect x="471" y="442" width="1" height="1" fill="#00ff00"/><rect x="473" y="442" width="1" height="1" fill="#00ffff"/><rect x="474" y="442" width="2" height="1" fill="#00ff00"/><rect x="477" y="442" width="1" height="1" fill="#00ff00"/><rect x="479" y="442" width="1" height="1" fill="#ff0000"/><rect x="480" y="442" width="1" height="1" fill="#00ff00"/><rect x="481" y="442" width="1" height="1" fill="#ff0000"/><rect x="482" y="442" width="2" height="1" fill="#ffff00"/><rect x="484" y="442" width="1" height="1" fill="#00ff00"/><rect x="485" y="442" width="2" height="1" fill="#ffff00"/><rect x="487" y="442" width="1" height="1" fill="#00ff00"/><rect x="491" y="442" width="1" height="1" fill="#00ff00"/><rect x="493" y="442" width="1" height="1" fill="#00ff00"/><rect x="495" y="442" width="1" height="1" fill="#00ffff"/><rect x="496" y="442" width="3" height="1" fill="#00ff00"/><rect x="500" y="442" width="2" height="1" fill="#ffff00"/><rect x="502" y="442" width="1" height="1" fill="#00ff00"/><rect x="504" y="442" width="1" height="1" fill="#00ff00"/><rect x="505" y="442" width="1" height="1" fill="#ff0000"/><rect x="507" y="442" width="1" height="1" fill="#00ff00"/><rect x="508" y="442" width="1" height="1" fill="#ffff00"/><rect x="509" y="442" width="1" height="1" fill="#00ff00"/><rect x="511" y="442" width="1" height="1" fill="#00ff00"/><rect x="513" y="442" width="2" height="1" fill="#00ff00"/><rect x="515" y="442" width="1" height="1" fill="#00ffff"/><rect x="516" y="442" width="1" height="1" fill="#ff0000"/><rect x="517" y="442" width="3" height="1" fill="#00ffff"/><rect x="521" y="442" width="1" height="1" fill="#00ff00"/><rect x="523" y="442" width="1" height="1" fill="#00ff00"/><rect x="526" y="442" width="1" height="1" fill="#ffff00"/><rect x="527" y="442" width="1" height="1" fill="#00ff00"/><rect x="531" y="442" width="1" height="1" fill="#ffff00"/><rect x="532" y="442" width="4" height="1" fill="#00ff00"/><rect x="536" y="442" width="1" height="1" fill="#ff0000"/><rect x="537" y="442" width="1" height="1" fill="#00ff00"/><rect x="539" y="442" width="1" height="1" fill="#00ffff"/><rect x="541" y="442" width="1" height="1" fill="#00ff00"/><rect x="543" y="442" width="3" height="1" fill="#00ff00"/><rect x="546" y="442" width="1" height="1" fill="#ffff00"/><rect x="547" y="442" width="1" height="1" fill="#00ffff"/><rect x="549" y="442" width="1" height="1" fill="#00ffff"/><rect x="550" y="442" width="1" height="1" fill="#00ff00"/><rect x="553" y="442" width="1" height="1" fill="#ffff00"/><rect x="554" y="442" width="2" height="1" fill="#00ffff"/><rect x="556" y="442" width="3" height="1" fill="#00ff00"/><rect x="566" y="442" width="1" height="1" fill="#00ff00"/><rect x="571" y="442" width="1" height="1" fill="#00ff00"/><rect x="575" y="442" width="1" height="1" fill="#00ff00"/><rect x="587" y="442" width="1" height="1" fill="#ff0000"/><rect x="179" y="357" width="1" height="1" fill="#00c000"/><rect x="458" y="233" width="1" height="1" fill="#666"/><rect x="440" y="424" width="1" height="1" fill="#2070ff"/></svg>



<!-- right controls -->
<div style="left:634px;top:174px;width:98px;height:26px;border:1px solid #3c7fb1;border-radius:3px;background:linear-gradient(to bottom,#f0f6fa 0,#e2eef6 48%,#c8dfec 52%,#b6d5e6 100%);box-shadow:inset 0 0 0 1px #46d4f8, inset 0 0 0 2px rgba(255,255,255,.55)"></div>
<div class="sep" style="top:213px"></div>
<div class="sep" style="top:261px"></div>
<div style="left:629px;top:295px;width:82px;height:24px;border:1px solid #b0b0b0;border-radius:2px;background:#fcfcfc"></div>
<div style="left:690px;top:297px;width:19px;height:10px;border:1px solid #c8c8c8;background:linear-gradient(#f4f4f4,#e4e4e4)"></div>
<div style="left:690px;top:307px;width:19px;height:10px;border:1px solid #c8c8c8;background:linear-gradient(#f4f4f4,#e4e4e4)"></div>
<svg style="position:absolute;left:696px;top:300px" width="8" height="15" viewBox="0 0 8 15"><polygon points="0.5,4 7.5,4 4,0.5" fill="#a0a0a0"/><polygon points="0.5,10.500 7.500,10.500 4,14" fill="#a0a0a0"/></svg>
<div class="sep" style="top:331px"></div>

<!-- radios -->
<svg style="position:absolute;left:629px;top:221px" width="16" height="36" viewBox="0 0 16 36">
<defs><radialGradient id="rb" cx="0.35" cy="0.3" r="0.75"><stop offset="0" stop-color="#d8f4ff"/><stop offset="0.35" stop-color="#38a8e0"/><stop offset="1" stop-color="#14609a"/></radialGradient>
<linearGradient id="rg" x1="0" y1="0" x2="1" y2="1"><stop offset="0" stop-color="#cfd3d8"/><stop offset="1" stop-color="#f8f8f8"/></linearGradient></defs>
<circle cx="8" cy="8" r="7.400" fill="#fdfdfd" stroke="#8e8f8f" stroke-width="1"/>
<circle cx="8" cy="8" r="5.300" fill="url(#rg)" stroke="#a8acb2" stroke-width="1"/>
<circle cx="8" cy="8" r="4.700" fill="#173e5e"/>
<circle cx="8" cy="8" r="3.500" fill="url(#rb)"/>
<circle cx="8" cy="28" r="7.400" fill="#fdfdfd" stroke="#8e8f8f" stroke-width="1"/>
<circle cx="8" cy="28" r="5.300" fill="url(#rg)" stroke="#b4b8be" stroke-width="1"/>
</svg>
<!-- checkboxes -->
<svg style="position:absolute;left:0;top:0" width="0" height="0"><defs><linearGradient id="cbg" x1="0" y1="0" x2="1" y2="1"><stop offset="0" stop-color="#cbd1da"/><stop offset="0.55" stop-color="#e6e8ec"/><stop offset="1" stop-color="#f6f6f6"/></linearGradient></defs></svg><svg style="position:absolute;left:629px;top:271px" width="16" height="16" viewBox="0 0 16 16"><rect x=".5" y=".5" width="15" height="15" fill="#fdfdfd" stroke="#8e8f8f"/><rect x="2.500" y="2.500" width="11" height="11" fill="url(#cbg)" stroke="#b6bcc8"/></svg><svg style="position:absolute;left:629px;top:345px" width="16" height="16" viewBox="0 0 16 16"><rect x=".5" y=".5" width="15" height="15" fill="#fdfdfd" stroke="#8e8f8f"/><rect x="2.500" y="2.500" width="11" height="11" fill="url(#cbg)" stroke="#b6bcc8"/><path d="M4.2 8 L7.1 12 L12.2 3.4" fill="none" stroke="#3a4c9c" stroke-width="2.3"/></svg><svg style="position:absolute;left:53px;top:499px" width="16" height="16" viewBox="0 0 16 16"><rect x=".5" y=".5" width="15" height="15" fill="#fdfdfd" stroke="#8e8f8f"/><rect x="2.500" y="2.500" width="11" height="11" fill="url(#cbg)" stroke="#b6bcc8"/><path d="M4.2 8 L7.1 12 L12.2 3.4" fill="none" stroke="#3a4c9c" stroke-width="2.3"/></svg><svg style="position:absolute;left:53px;top:519px" width="16" height="16" viewBox="0 0 16 16"><rect x=".5" y=".5" width="15" height="15" fill="#fdfdfd" stroke="#8e8f8f"/><rect x="2.500" y="2.500" width="11" height="11" fill="url(#cbg)" stroke="#b6bcc8"/><path d="M4.2 8 L7.1 12 L12.2 3.4" fill="none" stroke="#3a4c9c" stroke-width="2.3"/></svg><svg style="position:absolute;left:53px;top:539px" width="16" height="16" viewBox="0 0 16 16"><rect x=".5" y=".5" width="15" height="15" fill="#fdfdfd" stroke="#8e8f8f"/><rect x="2.500" y="2.500" width="11" height="11" fill="url(#cbg)" stroke="#b6bcc8"/><path d="M4.2 8 L7.1 12 L12.2 3.4" fill="none" stroke="#3a4c9c" stroke-width="2.3"/></svg><svg style="position:absolute;left:53px;top:561px" width="16" height="16" viewBox="0 0 16 16"><rect x=".5" y=".5" width="15" height="15" fill="#fdfdfd" stroke="#8e8f8f"/><rect x="2.500" y="2.500" width="11" height="11" fill="url(#cbg)" stroke="#b6bcc8"/><path d="M4.2 8 L7.1 12 L12.2 3.4" fill="none" stroke="#3a4c9c" stroke-width="2.3"/></svg><svg style="position:absolute;left:53px;top:583px" width="16" height="16" viewBox="0 0 16 16"><rect x=".5" y=".5" width="15" height="15" fill="#fdfdfd" stroke="#8e8f8f"/><rect x="2.500" y="2.500" width="11" height="11" fill="url(#cbg)" stroke="#b6bcc8"/><path d="M4.2 8 L7.1 12 L12.2 3.4" fill="none" stroke="#3a4c9c" stroke-width="2.3"/></svg>
<!-- table -->
<div style="left:53px;top:491px;width:694px;height:2px;background:#5a5a5a"></div>
<div style="left:173px;top:473px;width:2px;height:128px;background:#5a5a5a"></div>
<div style="left:319px;top:473px;width:2px;height:128px;background:#5a5a5a"></div>
<div style="left:473px;top:475px;width:2px;height:128px;background:#5a5a5a"></div>
<div style="left:619px;top:473px;width:2px;height:128px;background:#5a5a5a"></div>

<div class="sq" style="top:503px;background:#ffff00"></div>
<div class="sq" style="top:523px;background:#ff0000"></div>
<div class="sq" style="top:543px;background:#00ff00"></div>
<div class="sq" style="top:565px;background:#0080ff"></div>
<div class="sq" style="top:587px;background:#00ffff"></div>






<div id="tt1" class="tx" style="left:33.70px;top:10.0px;font-size:16px;transform:scaleX(0.9000)">HD</div>
<div id="tt2" class="tx" style="left:58.20px;top:10.0px;font-size:16px;transform:scaleX(0.9083)">Tune</div>
<div id="tt3" class="tx" style="left:95.62px;top:10.0px;font-size:16px;transform:scaleX(0.8792)">Pro</div>
<div id="tt4" class="tx" style="left:121.40px;top:10.0px;font-size:16px;transform:scaleX(0.8581)">4.60</div>
<div id="tt5" class="tx" style="left:153.40px;top:10.0px;font-size:16px;transform:scaleX(0.9000)">-</div>
<div id="tt6" class="tx" style="left:162.52px;top:10.0px;font-size:16px;transform:scaleX(0.8848)">Hard</div>
<div id="tt7" class="tx" style="left:197.49px;top:10.0px;font-size:16px;transform:scaleX(0.9133)">Disk</div>
<div id="tt8" class="tx" style="left:229.72px;top:10.0px;font-size:16px;transform:scaleX(0.9816)">Utility</div>
<div id="mf" class="tx" style="left:18.30px;top:40.0px;font-size:15.2px;transform:scaleX(0.9375)"><u>F</u>ile</div>
<div id="mh" class="tx" style="left:63.20px;top:40.0px;font-size:15.2px;transform:scaleX(1.0065)"><u>H</u>elp</div>
<div id="cb1" class="tx" style="left:26.99px;top:74.0px;font-size:14.5px;transform:scaleX(0.9061)">MX_DS SSD</div>
<div id="cb2" class="tx" style="left:150.35px;top:74.0px;font-size:14.5px;transform:scaleX(0.8967)">(40 gB)</div>
<div id="temp" class="tx" style="left:377.50px;top:76.0px;font-size:14.5px;transform:scaleX(0.9375);font-weight:bold">0°C</div>
<div id="exit" class="tx" style="left:717.61px;top:75.0px;font-size:14.5px;transform:scaleX(0.8875)">Exit</div>
<div id="t1" class="tx" style="left:71.67px;top:121.0px;font-size:14.5px;transform:scaleX(0.9292)">Benchmark</div>
<div id="t2" class="tx" style="left:211.65px;top:121.0px;font-size:14.5px;transform:scaleX(0.8478)">Info</div>
<div id="t3" class="tx" style="left:304.05px;top:121.0px;font-size:14.5px;transform:scaleX(0.9500)">Health</div>
<div id="t4" class="tx" style="left:414.34px;top:121.0px;font-size:14.5px;transform:scaleX(0.9081)">Error Scan</div>
<div id="t5" class="tx" style="left:548.05px;top:121.0px;font-size:14.5px;transform:scaleX(0.9535)">Folder Usage</div>
<div id="t6" class="tx" style="left:702.35px;top:121.0px;font-size:14.5px;transform:scaleX(0.9459)">Erase</div>
<div id="t7" class="tx" style="left:73.47px;top:141.0px;font-size:14.5px;transform:scaleX(0.9260)">File Benchmark</div>
<div id="t8" class="tx" style="left:243.58px;top:141.0px;font-size:14.5px;transform:scaleX(0.9187)">Disk monitor</div>
<div id="t9" class="tx" style="left:394.00px;top:141.0px;font-size:14.5px;transform:scaleX(0.9032)">AAM</div>
<div id="t10" class="tx" style="left:498.65px;top:139.0px;font-size:14.5px;transform:scaleX(0.9519)">Random Access</div>
<div id="t11" class="tx" style="left:674.60px;top:141.0px;font-size:14.5px;transform:scaleX(0.8955)">Extra tests</div>
<div id="ms" class="tx" style="left:68.73px;top:161.0px;font-size:13.5px;transform:scaleX(0.9706)">ms</div>
<div id="start" class="tx" style="left:668.52px;top:178.0px;font-size:14.5px;transform:scaleX(0.8833)">Start</div>
<div id="read" class="tx" style="left:647.69px;top:220.0px;font-size:14.5px;transform:scaleX(1.0061)">Read</div>
<div id="write" class="tx" style="left:648.20px;top:240.0px;font-size:14.5px;transform:scaleX(0.9121)">Write</div>
<div id="ss" class="tx" style="left:648.00px;top:270.0px;font-size:14.5px;transform:scaleX(0.8987)">Short stroke</div>
<div id="n40" class="tx" style="left:633.20px;top:298.0px;font-size:14.5px;transform:scaleX(0.7812);color:#838383">40</div>
<div id="gb" class="tx" style="left:727.60px;top:298.0px;font-size:14.5px;transform:scaleX(0.9294)">gB</div>
<div id="al" class="tx" style="left:648.40px;top:344.0px;font-size:14.5px;transform:scaleX(0.8803)">4 KB align</div>
<div id="h1" class="tx" style="left:69.70px;top:472.3px;font-size:14.5px;transform:scaleX(0.9765);font-weight:bold">transfer size</div>
<div id="h2" class="tx" style="left:194.00px;top:472.3px;font-size:14.5px;transform:scaleX(1.0091);font-weight:bold">operations / sec</div>
<div id="h3" class="tx" style="left:336.75px;top:472.3px;font-size:14.5px;transform:scaleX(1.0065);font-weight:bold">avg. access time</div>
<div id="h4" class="tx" style="left:488.50px;top:472.3px;font-size:14.5px;transform:scaleX(1.0000);font-weight:bold">max. access time</div>
<div id="h5" class="tx" style="left:652.75px;top:472.3px;font-size:14.5px;transform:scaleX(1.0405);font-weight:bold">avg. speed</div>
<div id="l1" class="tx" style="left:71.29px;top:497.6px;font-size:14.5px;transform:scaleX(0.9081)">512 bytes</div>
<div id="l2" class="tx" style="left:72.20px;top:517.5px;font-size:14.5px;transform:scaleX(0.8452)">4 KB</div>
<div id="l3" class="tx" style="left:72.20px;top:537.5px;font-size:14.5px;transform:scaleX(0.8385)">64 KB</div>
<div id="l4" class="tx" style="left:72.86px;top:559.6px;font-size:14.5px;transform:scaleX(0.8394)">1 MB</div>
<div id="l5" class="tx" style="left:71.54px;top:581.8px;font-size:14.5px;transform:scaleX(0.9642)">Random</div>
<div id="y0" class="tx" style="left:34.00px;top:168.0px;font-size:14.5px;transform:scaleX(0.8583)">200.0</div>
<div id="y1" class="tx" style="left:34.00px;top:195.0px;font-size:14.5px;transform:scaleX(0.8583)">180.0</div>
<div id="y2" class="tx" style="left:34.00px;top:222.0px;font-size:14.5px;transform:scaleX(0.8583)">160.0</div>
<div id="y3" class="tx" style="left:34.00px;top:248.0px;font-size:14.5px;transform:scaleX(0.8583)">140.0</div>
<div id="y4" class="tx" style="left:34.00px;top:275.0px;font-size:14.5px;transform:scaleX(0.8583)">120.0</div>
<div id="y5" class="tx" style="left:34.00px;top:301.0px;font-size:14.5px;transform:scaleX(0.8583)">100.0</div>
<div id="y6" class="tx" style="left:40.87px;top:328.0px;font-size:14.5px;transform:scaleX(0.8583)">80.0</div>
<div id="y7" class="tx" style="left:40.87px;top:355.0px;font-size:14.5px;transform:scaleX(0.8583)">60.0</div>
<div id="y8" class="tx" style="left:40.87px;top:381.0px;font-size:14.5px;transform:scaleX(0.8583)">40.0</div>
<div id="y9" class="tx" style="left:40.87px;top:408.0px;font-size:14.5px;transform:scaleX(0.8583)">20.0</div>
<div id="x0" class="tx" style="left:65.67px;top:446.0px;font-size:14.5px;transform:scaleX(0.8583)">0</div>
<div id="x1" class="tx" style="left:117.67px;top:446.0px;font-size:14.5px;transform:scaleX(0.8583)">4</div>
<div id="x2" class="tx" style="left:169.67px;top:446.0px;font-size:14.5px;transform:scaleX(0.8583)">8</div>
<div id="x3" class="tx" style="left:217.80px;top:446.0px;font-size:14.5px;transform:scaleX(0.8583)">12</div>
<div id="x4" class="tx" style="left:269.80px;top:446.0px;font-size:14.5px;transform:scaleX(0.8583)">16</div>
<div id="x5" class="tx" style="left:322.23px;top:446.0px;font-size:14.5px;transform:scaleX(0.8583)">20</div>
<div id="x6" class="tx" style="left:374.23px;top:446.0px;font-size:14.5px;transform:scaleX(0.8583)">24</div>
<div id="x7" class="tx" style="left:426.23px;top:446.0px;font-size:14.5px;transform:scaleX(0.8583)">28</div>
<div id="x8" class="tx" style="left:478.23px;top:446.0px;font-size:14.5px;transform:scaleX(0.8583)">32</div>
<div id="x9" class="tx" style="left:530.23px;top:446.0px;font-size:14.5px;transform:scaleX(0.8583)">36</div>
<div id="x10" class="tx" style="left:574.20px;top:446.0px;font-size:14.5px;transform:scaleX(0.8618)">40gB</div>
<div id="v0_0" class="tx" style="left:218.41px;top:496.0px;font-size:14.5px;transform:scaleX(0.9949);font-weight:bold">17169 IOPS</div>
<div id="v0_1" class="tx" style="left:218.41px;top:516.0px;font-size:14.5px;transform:scaleX(0.9949);font-weight:bold">14899 IOPS</div>
<div id="v0_2" class="tx" style="left:226.36px;top:536.0px;font-size:14.5px;transform:scaleX(0.9949);font-weight:bold">1973 IOPS</div>
<div id="v0_3" class="tx" style="left:234.32px;top:558.0px;font-size:14.5px;transform:scaleX(0.9949);font-weight:bold">264 IOPS</div>
<div id="v0_4" class="tx" style="left:234.32px;top:580.0px;font-size:14.5px;transform:scaleX(0.9949);font-weight:bold">513 IOPS</div>
<div id="v1_0" class="tx" style="left:383.75px;top:496.0px;font-size:14.5px;transform:scaleX(0.9713);font-weight:bold">0.058 ms</div>
<div id="v1_1" class="tx" style="left:383.75px;top:516.0px;font-size:14.5px;transform:scaleX(0.9713);font-weight:bold">0.067 ms</div>
<div id="v1_2" class="tx" style="left:383.75px;top:536.0px;font-size:14.5px;transform:scaleX(0.9713);font-weight:bold">0.506 ms</div>
<div id="v1_3" class="tx" style="left:383.75px;top:558.0px;font-size:14.5px;transform:scaleX(0.9713);font-weight:bold">3.787 ms</div>
<div id="v1_4" class="tx" style="left:383.75px;top:580.0px;font-size:14.5px;transform:scaleX(0.9713);font-weight:bold">1.946 ms</div>
<div id="v2_0" class="tx" style="left:529.78px;top:496.0px;font-size:14.5px;transform:scaleX(0.9667);font-weight:bold">1.439 ms</div>
<div id="v2_1" class="tx" style="left:529.78px;top:516.0px;font-size:14.5px;transform:scaleX(0.9667);font-weight:bold">1.281 ms</div>
<div id="v2_2" class="tx" style="left:514.32px;top:536.0px;font-size:14.5px;transform:scaleX(0.9667);font-weight:bold">156.978 ms</div>
<div id="v2_3" class="tx" style="left:522.05px;top:558.0px;font-size:14.5px;transform:scaleX(0.9667);font-weight:bold">13.928 ms</div>
<div id="v2_4" class="tx" style="left:529.78px;top:580.0px;font-size:14.5px;transform:scaleX(0.9667);font-weight:bold">4.912 ms</div>
<div id="v3_0" class="tx" style="left:660.50px;top:496.0px;font-size:14.5px;transform:scaleX(0.9967);font-weight:bold">8.384 MB/s</div>
<div id="v3_1" class="tx" style="left:652.53px;top:516.0px;font-size:14.5px;transform:scaleX(0.9967);font-weight:bold">58.202 MB/s</div>
<div id="v3_2" class="tx" style="left:644.55px;top:536.0px;font-size:14.5px;transform:scaleX(0.9967);font-weight:bold">123.331 MB/s</div>
<div id="v3_3" class="tx" style="left:644.55px;top:558.0px;font-size:14.5px;transform:scaleX(0.9967);font-weight:bold">264.014 MB/s</div>
<div id="v3_4" class="tx" style="left:644.55px;top:580.0px;font-size:14.5px;transform:scaleX(0.9967);font-weight:bold">260.661 MB/s</div>
</div>
</body></html>
